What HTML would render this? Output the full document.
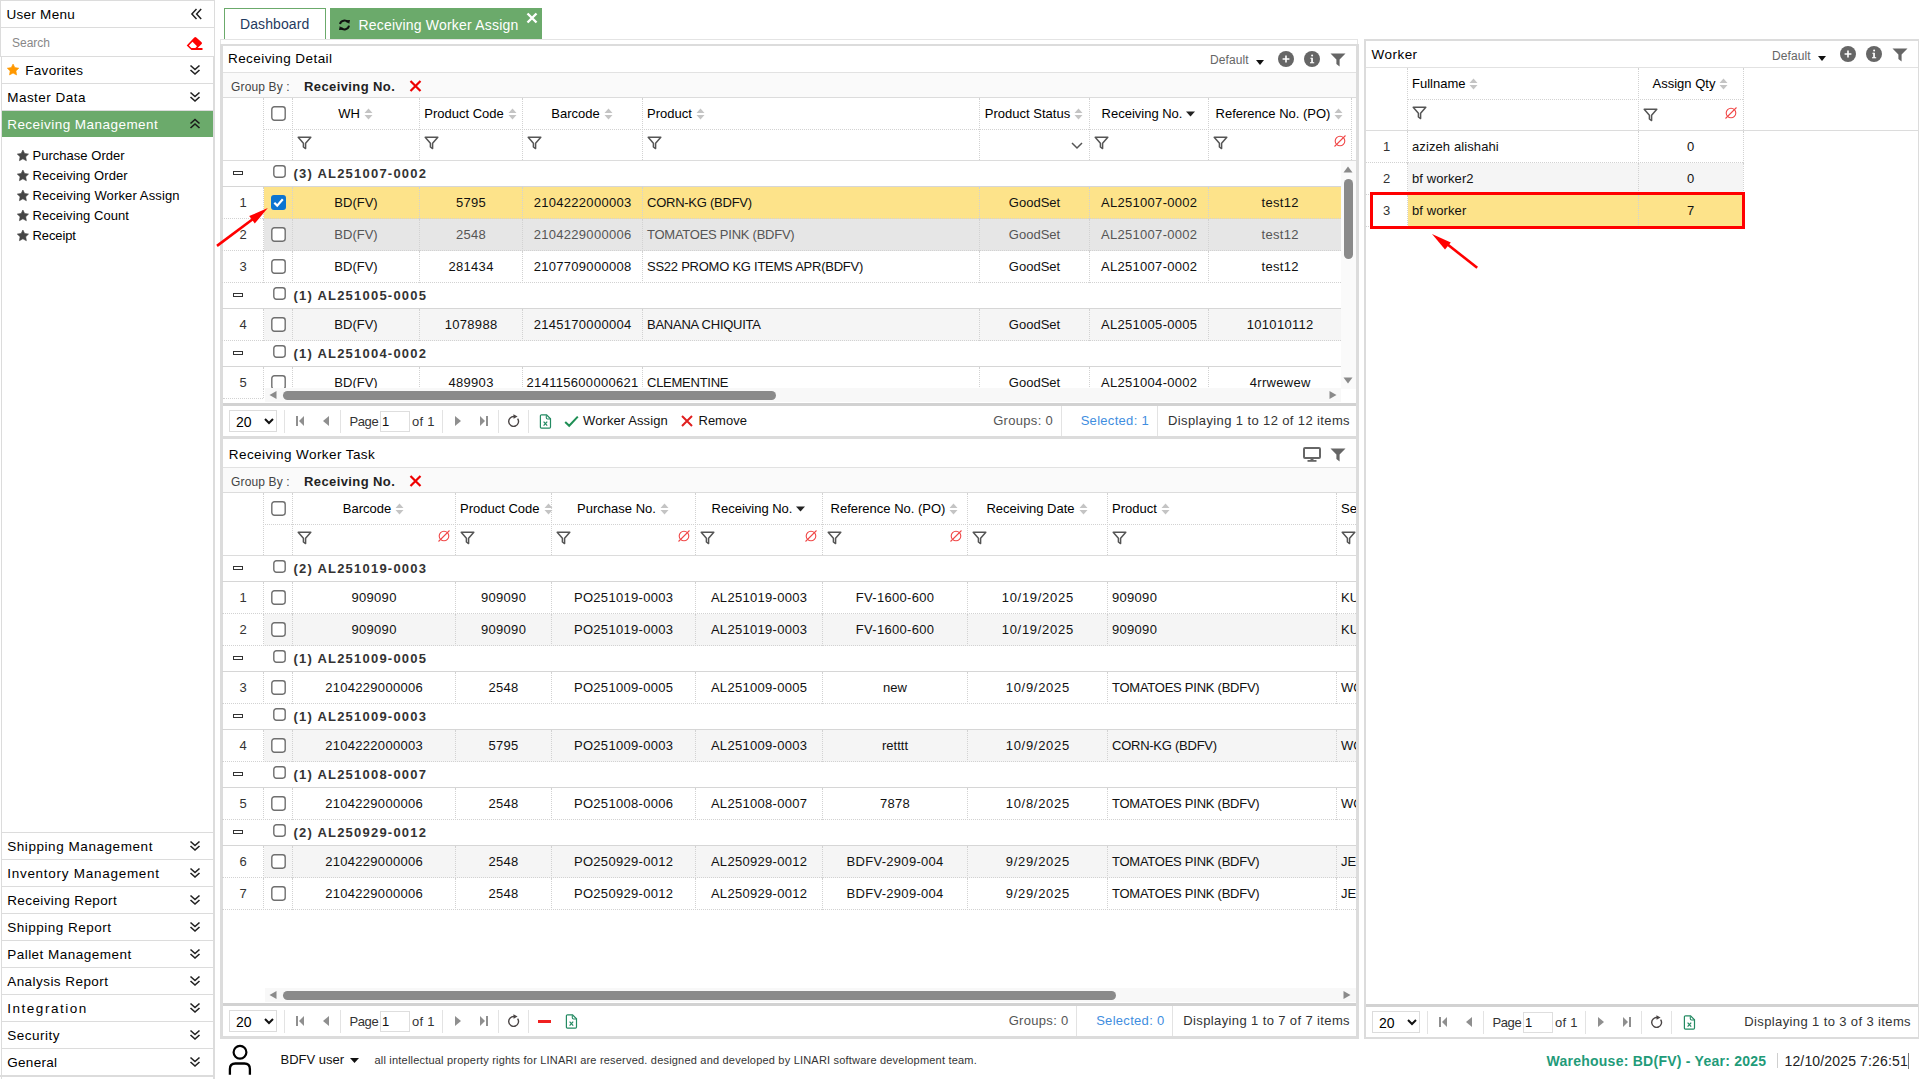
<!DOCTYPE html><html><head><meta charset="utf-8"><style>
html,body{margin:0;padding:0;width:1919px;height:1079px;overflow:hidden;background:#fff;font-family:"Liberation Sans",sans-serif;}
div{position:absolute;box-sizing:content-box}
.t{white-space:nowrap;overflow:visible}
</style></head><body>
<div style="left:0px;top:0px;width:213px;height:56px;border:1px solid #dcdcdc;border-right:1px solid #dcdcdc;border-bottom:none"></div>
<div style="left:1px;top:27px;width:213px;height:1px;background:#dcdcdc"></div>
<div style="left:1px;top:56px;width:213px;height:1px;background:#dcdcdc"></div>
<div class="t" style="top:4.5px;height:20px;line-height:20px;font-size:13.5px;color:#000;letter-spacing:0.271px;left:6.5px;">User Menu</div>
<svg style="position:absolute;left:189.7px;top:7px;" width="14" height="14" viewBox="0 0 14 14"><path d="M6.5 1.9 L1.9 6.9 L6.5 11.9 M11.2 1.9 L6.6 6.9 L11.2 11.9" fill="none" stroke="#222" stroke-width="1.5"/></svg>
<div class="t" style="top:32.5px;height:20px;line-height:20px;font-size:12px;color:#888;left:12px;">Search</div>
<svg style="position:absolute;left:186px;top:36px;" width="18" height="15" viewBox="0 0 18 15"><path d="M0.7 9.5 L8.3 1.6 Q9.3 0.6 10.3 1.6 L15.6 6.2 Q16.5 7.1 15.6 8 L11.6 12 H16.5 V13.9 H5.4 Z" fill="#f00"/><path d="M2.9 9.4 L6.5 5.8 L11 10.2 L9.4 11.9 H5.4 Z" fill="#fff"/></svg>
<div style="left:1px;top:57px;width:211px;height:1022px;border-left:1px solid #dcdcdc;border-right:2px solid #dcdcdc;"></div>
<div style="left:2px;top:83px;width:211px;height:1px;background:#dcdcdc"></div>
<div style="left:2px;top:110px;width:211px;height:1px;background:#dcdcdc"></div>
<svg style="position:absolute;left:6.3999999999999995px;top:63.2px;" width="15" height="15" viewBox="0 0 15 15"><path d="M7.05 1.00 L8.83 4.60 L12.80 5.18 L9.93 7.98 L10.61 11.94 L7.05 10.07 L3.49 11.94 L4.17 7.98 L1.30 5.18 L5.27 4.60 Z" fill="#ff9800" stroke="#ff9800" stroke-width="0.6" stroke-linejoin="round"/></svg>
<div class="t" style="top:60.5px;height:20px;line-height:20px;font-size:13.5px;color:#000;letter-spacing:0.284px;left:25.3px;">Favorites</div>
<svg style="position:absolute;left:189px;top:64px;" width="12" height="12" viewBox="0 0 12 12"><path d="M1.5 1.5 L6 5.5 L10.5 1.5 M1.5 6 L6 10 L10.5 6" fill="none" stroke="#222" stroke-width="1.6"/></svg>
<div class="t" style="top:87.5px;height:20px;line-height:20px;font-size:13.5px;color:#000;letter-spacing:0.477px;left:7.2px;">Master Data</div>
<svg style="position:absolute;left:189px;top:91px;" width="12" height="12" viewBox="0 0 12 12"><path d="M1.5 1.5 L6 5.5 L10.5 1.5 M1.5 6 L6 10 L10.5 6" fill="none" stroke="#222" stroke-width="1.6"/></svg>
<div style="left:2px;top:111px;width:211px;height:26px;background:#6baa6b"></div>
<div class="t" style="top:114.5px;height:20px;line-height:20px;font-size:13.5px;color:#fff;letter-spacing:0.461px;left:7.2px;">Receiving Management</div>
<svg style="position:absolute;left:189px;top:118px;" width="12" height="12" viewBox="0 0 12 12"><path d="M1.5 5.5 L6 1.5 L10.5 5.5 M1.5 10 L6 6 L10.5 10" fill="none" stroke="#1a1a1a" stroke-width="1.6"/></svg>
<svg style="position:absolute;left:15.950000000000003px;top:149.3px;" width="14" height="14" viewBox="0 0 14 14"><path d="M6.90 1.00 L8.63 4.51 L12.51 5.08 L9.71 7.81 L10.37 11.67 L6.90 9.85 L3.43 11.67 L4.09 7.81 L1.29 5.08 L5.17 4.51 Z" fill="#444" stroke="#444" stroke-width="0.6" stroke-linejoin="round"/></svg>
<div class="t" style="top:145.5px;height:20px;line-height:20px;font-size:13px;color:#000;letter-spacing:0.026px;left:32.5px;">Purchase Order</div>
<svg style="position:absolute;left:15.950000000000003px;top:169.3px;" width="14" height="14" viewBox="0 0 14 14"><path d="M6.90 1.00 L8.63 4.51 L12.51 5.08 L9.71 7.81 L10.37 11.67 L6.90 9.85 L3.43 11.67 L4.09 7.81 L1.29 5.08 L5.17 4.51 Z" fill="#444" stroke="#444" stroke-width="0.6" stroke-linejoin="round"/></svg>
<div class="t" style="top:165.5px;height:20px;line-height:20px;font-size:13px;color:#000;letter-spacing:0.090px;left:32.5px;">Receiving Order</div>
<svg style="position:absolute;left:15.950000000000003px;top:189.3px;" width="14" height="14" viewBox="0 0 14 14"><path d="M6.90 1.00 L8.63 4.51 L12.51 5.08 L9.71 7.81 L10.37 11.67 L6.90 9.85 L3.43 11.67 L4.09 7.81 L1.29 5.08 L5.17 4.51 Z" fill="#444" stroke="#444" stroke-width="0.6" stroke-linejoin="round"/></svg>
<div class="t" style="top:185.5px;height:20px;line-height:20px;font-size:13px;color:#000;letter-spacing:0.124px;left:32.5px;">Receiving Worker Assign</div>
<svg style="position:absolute;left:15.950000000000003px;top:209.3px;" width="14" height="14" viewBox="0 0 14 14"><path d="M6.90 1.00 L8.63 4.51 L12.51 5.08 L9.71 7.81 L10.37 11.67 L6.90 9.85 L3.43 11.67 L4.09 7.81 L1.29 5.08 L5.17 4.51 Z" fill="#444" stroke="#444" stroke-width="0.6" stroke-linejoin="round"/></svg>
<div class="t" style="top:205.5px;height:20px;line-height:20px;font-size:13px;color:#000;letter-spacing:0.072px;left:32.5px;">Receiving Count</div>
<svg style="position:absolute;left:15.950000000000003px;top:229.3px;" width="14" height="14" viewBox="0 0 14 14"><path d="M6.90 1.00 L8.63 4.51 L12.51 5.08 L9.71 7.81 L10.37 11.67 L6.90 9.85 L3.43 11.67 L4.09 7.81 L1.29 5.08 L5.17 4.51 Z" fill="#444" stroke="#444" stroke-width="0.6" stroke-linejoin="round"/></svg>
<div class="t" style="top:225.5px;height:20px;line-height:20px;font-size:13px;color:#000;letter-spacing:-0.113px;left:32.5px;">Receipt</div>
<div style="left:2px;top:832px;width:211px;height:1px;background:#dcdcdc"></div>
<div class="t" style="top:836.5px;height:20px;line-height:20px;font-size:13.5px;color:#000;letter-spacing:0.561px;left:7.2px;">Shipping Management</div>
<svg style="position:absolute;left:189px;top:840px;" width="12" height="12" viewBox="0 0 12 12"><path d="M1.5 1.5 L6 5.5 L10.5 1.5 M1.5 6 L6 10 L10.5 6" fill="none" stroke="#222" stroke-width="1.6"/></svg>
<div style="left:2px;top:859px;width:211px;height:1px;background:#dcdcdc"></div>
<div class="t" style="top:863.5px;height:20px;line-height:20px;font-size:13.5px;color:#000;letter-spacing:0.727px;left:7.2px;">Inventory Management</div>
<svg style="position:absolute;left:189px;top:867px;" width="12" height="12" viewBox="0 0 12 12"><path d="M1.5 1.5 L6 5.5 L10.5 1.5 M1.5 6 L6 10 L10.5 6" fill="none" stroke="#222" stroke-width="1.6"/></svg>
<div style="left:2px;top:886px;width:211px;height:1px;background:#dcdcdc"></div>
<div class="t" style="top:890.5px;height:20px;line-height:20px;font-size:13.5px;color:#000;letter-spacing:0.402px;left:7.2px;">Receiving Report</div>
<svg style="position:absolute;left:189px;top:894px;" width="12" height="12" viewBox="0 0 12 12"><path d="M1.5 1.5 L6 5.5 L10.5 1.5 M1.5 6 L6 10 L10.5 6" fill="none" stroke="#222" stroke-width="1.6"/></svg>
<div style="left:2px;top:913px;width:211px;height:1px;background:#dcdcdc"></div>
<div class="t" style="top:917.5px;height:20px;line-height:20px;font-size:13.5px;color:#000;letter-spacing:0.505px;left:7.2px;">Shipping Report</div>
<svg style="position:absolute;left:189px;top:921px;" width="12" height="12" viewBox="0 0 12 12"><path d="M1.5 1.5 L6 5.5 L10.5 1.5 M1.5 6 L6 10 L10.5 6" fill="none" stroke="#222" stroke-width="1.6"/></svg>
<div style="left:2px;top:940px;width:211px;height:1px;background:#dcdcdc"></div>
<div class="t" style="top:944.5px;height:20px;line-height:20px;font-size:13.5px;color:#000;letter-spacing:0.479px;left:7.2px;">Pallet Management</div>
<svg style="position:absolute;left:189px;top:948px;" width="12" height="12" viewBox="0 0 12 12"><path d="M1.5 1.5 L6 5.5 L10.5 1.5 M1.5 6 L6 10 L10.5 6" fill="none" stroke="#222" stroke-width="1.6"/></svg>
<div style="left:2px;top:967px;width:211px;height:1px;background:#dcdcdc"></div>
<div class="t" style="top:971.5px;height:20px;line-height:20px;font-size:13.5px;color:#000;letter-spacing:0.447px;left:7.2px;">Analysis Report</div>
<svg style="position:absolute;left:189px;top:975px;" width="12" height="12" viewBox="0 0 12 12"><path d="M1.5 1.5 L6 5.5 L10.5 1.5 M1.5 6 L6 10 L10.5 6" fill="none" stroke="#222" stroke-width="1.6"/></svg>
<div style="left:2px;top:994px;width:211px;height:1px;background:#dcdcdc"></div>
<div class="t" style="top:998.5px;height:20px;line-height:20px;font-size:13.5px;color:#000;letter-spacing:1.540px;left:7.2px;">Integration</div>
<svg style="position:absolute;left:189px;top:1002px;" width="12" height="12" viewBox="0 0 12 12"><path d="M1.5 1.5 L6 5.5 L10.5 1.5 M1.5 6 L6 10 L10.5 6" fill="none" stroke="#222" stroke-width="1.6"/></svg>
<div style="left:2px;top:1021px;width:211px;height:1px;background:#dcdcdc"></div>
<div class="t" style="top:1025.5px;height:20px;line-height:20px;font-size:13.5px;color:#000;letter-spacing:0.503px;left:7.2px;">Security</div>
<svg style="position:absolute;left:189px;top:1029px;" width="12" height="12" viewBox="0 0 12 12"><path d="M1.5 1.5 L6 5.5 L10.5 1.5 M1.5 6 L6 10 L10.5 6" fill="none" stroke="#222" stroke-width="1.6"/></svg>
<div style="left:2px;top:1048px;width:211px;height:1px;background:#dcdcdc"></div>
<div class="t" style="top:1052.5px;height:20px;line-height:20px;font-size:13.5px;color:#000;letter-spacing:0.311px;left:7.2px;">General</div>
<svg style="position:absolute;left:189px;top:1056px;" width="12" height="12" viewBox="0 0 12 12"><path d="M1.5 1.5 L6 5.5 L10.5 1.5 M1.5 6 L6 10 L10.5 6" fill="none" stroke="#222" stroke-width="1.6"/></svg>
<div style="left:0px;top:1075px;width:213px;height:2px;background:#dcdcdc"></div>
<div style="left:224px;top:8px;width:100px;height:30px;border:1px solid #6baa6b;border-bottom:none;background:#fff"></div>
<div class="t" style="top:14.0px;height:20px;line-height:20px;font-size:14px;color:#1f3a60;letter-spacing:0.1px;left:240px;">Dashboard</div>
<div style="left:330px;top:8px;width:212px;height:31px;background:#6baa6b"></div>
<svg style="position:absolute;left:338px;top:19px;" width="13" height="12" viewBox="0 0 13 12"><path d="M2 5 A4.5 4.5 0 0 1 10 3.4" fill="none" stroke="#111" stroke-width="2"/><path d="M11 6.6 A4.5 4.5 0 0 1 3 8.6" fill="none" stroke="#111" stroke-width="2"/><path d="M8.2 1.2 L12 1 L11.2 5 Z M4.8 10.8 L1 11 L1.8 7 Z" fill="#111"/></svg>
<div class="t" style="top:14.5px;height:20px;line-height:20px;font-size:14px;color:#fff;letter-spacing:0.2px;left:358.5px;">Receiving Worker Assign</div>
<svg style="position:absolute;left:526px;top:12px;" width="12" height="12" viewBox="0 0 12 12"><path d="M1.5 1.5 L10.5 10.5 M10.5 1.5 L1.5 10.5" stroke="#fff" stroke-width="2.4"/></svg>
<div style="left:220px;top:39px;width:1138px;height:1px;background:#e4e4e4"></div>
<div style="left:220px;top:39px;width:1px;height:6px;background:#e4e4e4"></div>
<div style="left:1357px;top:39px;width:1px;height:6px;background:#e4e4e4"></div>
<div style="left:220px;top:44px;width:3px;height:394px;background:#dcdcdc"></div>
<div style="left:220px;top:44px;width:1138px;height:2px;background:#dcdcdc"></div>
<div style="left:1356px;top:44px;width:3px;height:395px;background:#dcdcdc"></div>
<div style="left:220px;top:436px;width:1139px;height:3px;background:#dcdcdc"></div>
<div style="left:223px;top:72px;width:1133px;height:1px;background:#e2e2e2"></div>
<div class="t" style="top:49.3px;height:20px;line-height:20px;font-size:13.5px;color:#000;letter-spacing:0.430px;left:228px;">Receiving Detail</div>
<div class="t" style="top:50.0px;height:20px;line-height:20px;font-size:12px;color:#666;letter-spacing:0.1px;left:1210px;">Default</div>
<svg style="position:absolute;left:1256px;top:60px;" width="8" height="5" viewBox="0 0 8 5"><path d="M0 0 L8 0 L4.0 5 Z" fill="#111"/></svg>
<svg style="position:absolute;left:1278px;top:51px;" width="16" height="16" viewBox="0 0 16 16"><circle cx="8" cy="8" r="8" fill="#666"/><path d="M8 4.6 V11.4 M4.6 8 H11.4" stroke="#fff" stroke-width="1.6"/></svg>
<svg style="position:absolute;left:1304px;top:51px;" width="16" height="16" viewBox="0 0 16 16"><circle cx="8" cy="8" r="8" fill="#666"/><rect x="7.2" y="6.8" width="1.7" height="5" fill="#fff"/><rect x="6" y="11.2" width="4.2" height="1.1" fill="#fff"/><rect x="6.3" y="6.8" width="1.6" height="0.9" fill="#fff"/><circle cx="8.1" cy="4.6" r="1" fill="#fff"/></svg>
<svg style="position:absolute;left:1330px;top:53px;" width="16" height="14" viewBox="0 0 16 14"><path d="M0.5 0.5 H15.5 L9.6 6.6 V13.5 L6.4 11 V6.6 Z" fill="#666"/></svg>
<div style="left:223px;top:73px;width:1133px;height:24px;background:#fafafa"></div>
<div style="left:223px;top:97px;width:1133px;height:1px;background:#dcdcdc"></div>
<div class="t" style="top:77.0px;height:20px;line-height:20px;font-size:12px;color:#444;letter-spacing:0.15px;left:231px;">Group By :</div>
<div class="t" style="top:76.5px;height:20px;line-height:20px;font-size:13px;color:#222;font-weight:700;letter-spacing:0.4px;left:304px;">Receiving No.</div>
<svg style="position:absolute;left:409px;top:80px;" width="13" height="12" viewBox="0 0 13 12"><path d="M1.5 1 L11.5 11 M11.5 1 L1.5 11" stroke="#e00" stroke-width="2.2"/></svg>
<div style="left:263px;top:98px;width:0px;height:62px;border-left:1px dotted #d2d2d2"></div>
<div style="left:292px;top:98px;width:0px;height:62px;border-left:1px dotted #d2d2d2"></div>
<div style="left:419px;top:98px;width:0px;height:62px;border-left:1px dotted #d2d2d2"></div>
<div style="left:522px;top:98px;width:0px;height:62px;border-left:1px dotted #d2d2d2"></div>
<div style="left:642px;top:98px;width:0px;height:62px;border-left:1px dotted #d2d2d2"></div>
<div style="left:979px;top:98px;width:0px;height:62px;border-left:1px dotted #d2d2d2"></div>
<div style="left:1089px;top:98px;width:0px;height:62px;border-left:1px dotted #d2d2d2"></div>
<div style="left:1208px;top:98px;width:0px;height:62px;border-left:1px dotted #d2d2d2"></div>
<div style="left:1351px;top:98px;width:0px;height:62px;border-left:1px dotted #d2d2d2"></div>
<div style="left:263px;top:129px;width:1088px;height:0px;border-top:1px dotted #d2d2d2"></div>
<div style="left:222px;top:160px;width:1134px;height:1px;background:#dcdcdc"></div>
<svg style="position:absolute;left:271px;top:106px;" width="15" height="15" viewBox="0 0 15 15"><rect x="0.8" y="0.8" width="13.4" height="13.4" rx="2.6" fill="#fff" stroke="#6f6f6f" stroke-width="1.4"/></svg>
<div class="t" style="top:104.0px;height:20px;line-height:20px;font-size:13px;color:#000;left:338.1640625px;">WH</div>
<svg style="position:absolute;left:363.8359375px;top:108.0px;" width="9" height="12" viewBox="0 0 9 12"><path d="M4.5 0.5 L8.5 5 L0.5 5 Z M0.5 7 L8.5 7 L4.5 11.5 Z" fill="#c4c4c4"/></svg>
<div class="t" style="top:104.0px;height:20px;line-height:20px;font-size:13px;color:#000;left:424.25px;">Product Code</div>
<svg style="position:absolute;left:507.75px;top:108.0px;" width="9" height="12" viewBox="0 0 9 12"><path d="M4.5 0.5 L8.5 5 L0.5 5 Z M0.5 7 L8.5 7 L4.5 11.5 Z" fill="#c4c4c4"/></svg>
<div class="t" style="top:104.0px;height:20px;line-height:20px;font-size:13px;color:#000;left:551.2890625px;">Barcode</div>
<svg style="position:absolute;left:603.7109375px;top:108.0px;" width="9" height="12" viewBox="0 0 9 12"><path d="M4.5 0.5 L8.5 5 L0.5 5 Z M0.5 7 L8.5 7 L4.5 11.5 Z" fill="#c4c4c4"/></svg>
<div class="t" style="top:104.0px;height:20px;line-height:20px;font-size:13px;color:#000;left:647px;">Product</div>
<svg style="position:absolute;left:695.8125px;top:108.0px;" width="9" height="12" viewBox="0 0 9 12"><path d="M4.5 0.5 L8.5 5 L0.5 5 Z M0.5 7 L8.5 7 L4.5 11.5 Z" fill="#c4c4c4"/></svg>
<div class="t" style="top:104.0px;height:20px;line-height:20px;font-size:13px;color:#000;left:984.859375px;">Product Status</div>
<svg style="position:absolute;left:1074.140625px;top:108.0px;" width="9" height="12" viewBox="0 0 9 12"><path d="M4.5 0.5 L8.5 5 L0.5 5 Z M0.5 7 L8.5 7 L4.5 11.5 Z" fill="#c4c4c4"/></svg>
<div class="t" style="top:104.0px;height:20px;line-height:20px;font-size:13px;color:#000;left:1101.53125px;">Receiving No.</div>
<svg style="position:absolute;left:1186.46875px;top:111.0px;" width="9" height="6" viewBox="0 0 9 6"><path d="M0 0.5 L9 0.5 L4.5 5.5 Z" fill="#222"/></svg>
<div class="t" style="top:104.0px;height:20px;line-height:20px;font-size:13px;color:#000;left:1215.5625px;">Reference No. (PO)</div>
<svg style="position:absolute;left:1334.4375px;top:108.0px;" width="9" height="12" viewBox="0 0 9 12"><path d="M4.5 0.5 L8.5 5 L0.5 5 Z M0.5 7 L8.5 7 L4.5 11.5 Z" fill="#c4c4c4"/></svg>
<svg style="position:absolute;left:297px;top:136px;" width="15" height="14" viewBox="0 0 15 14"><path d="M1.2 1.2 H13.8 L8.6 7.2 V12.6 L6.4 11 V7.2 Z" fill="none" stroke="#555" stroke-width="1.5" stroke-linejoin="round"/></svg>
<svg style="position:absolute;left:424px;top:136px;" width="15" height="14" viewBox="0 0 15 14"><path d="M1.2 1.2 H13.8 L8.6 7.2 V12.6 L6.4 11 V7.2 Z" fill="none" stroke="#555" stroke-width="1.5" stroke-linejoin="round"/></svg>
<svg style="position:absolute;left:527px;top:136px;" width="15" height="14" viewBox="0 0 15 14"><path d="M1.2 1.2 H13.8 L8.6 7.2 V12.6 L6.4 11 V7.2 Z" fill="none" stroke="#555" stroke-width="1.5" stroke-linejoin="round"/></svg>
<svg style="position:absolute;left:647px;top:136px;" width="15" height="14" viewBox="0 0 15 14"><path d="M1.2 1.2 H13.8 L8.6 7.2 V12.6 L6.4 11 V7.2 Z" fill="none" stroke="#555" stroke-width="1.5" stroke-linejoin="round"/></svg>
<svg style="position:absolute;left:1071px;top:141.5px;" width="12" height="8" viewBox="0 0 12 8"><path d="M1 1 L6 6 L11 1" fill="none" stroke="#555" stroke-width="1.5"/></svg>
<svg style="position:absolute;left:1094px;top:136px;" width="15" height="14" viewBox="0 0 15 14"><path d="M1.2 1.2 H13.8 L8.6 7.2 V12.6 L6.4 11 V7.2 Z" fill="none" stroke="#555" stroke-width="1.5" stroke-linejoin="round"/></svg>
<svg style="position:absolute;left:1213px;top:136px;" width="15" height="14" viewBox="0 0 15 14"><path d="M1.2 1.2 H13.8 L8.6 7.2 V12.6 L6.4 11 V7.2 Z" fill="none" stroke="#555" stroke-width="1.5" stroke-linejoin="round"/></svg>
<svg style="position:absolute;left:1333px;top:134px;" width="14" height="14" viewBox="0 0 14 14"><circle cx="7" cy="7" r="4.8" fill="none" stroke="#f04848" stroke-width="1.1"/><path d="M1.5 12.5 L12.5 1.5" stroke="#f04848" stroke-width="1.1"/></svg>
<div style="left:0;top:0;width:1919px;height:1079px;clip-path:polygon(222px 161px, 1356px 161px, 1356px 389px, 222px 389px)">
<div style="left:233px;top:171px;width:8px;height:2px;border:1px solid #333"></div>
<svg style="position:absolute;left:273px;top:165px;" width="13" height="13" viewBox="0 0 13 13"><rect x="0.8" y="0.8" width="11.4" height="11.4" rx="2.6" fill="#fff" stroke="#6f6f6f" stroke-width="1.4"/></svg>
<div class="t" style="top:163.5px;height:20px;line-height:20px;font-size:13px;color:#333;font-weight:700;letter-spacing:1.22px;left:293.5px;">(3) AL251007-0002</div>
<div style="left:222px;top:186px;width:1134px;height:1px;background:#d6d6d6"></div>
<div style="left:264px;top:187px;width:1077px;height:32px;background:#fde38a"></div>
<div style="left:222px;top:218px;width:1119px;height:0px;border-top:1px dotted #d2d2d2"></div>
<div style="left:263px;top:187px;width:0px;height:32px;border-left:1px dotted #d2d2d2"></div>
<div style="left:292px;top:187px;width:0px;height:32px;border-left:1px dotted #d2d2d2"></div>
<div style="left:419px;top:187px;width:0px;height:32px;border-left:1px dotted #d2d2d2"></div>
<div style="left:522px;top:187px;width:0px;height:32px;border-left:1px dotted #d2d2d2"></div>
<div style="left:642px;top:187px;width:0px;height:32px;border-left:1px dotted #d2d2d2"></div>
<div style="left:979px;top:187px;width:0px;height:32px;border-left:1px dotted #d2d2d2"></div>
<div style="left:1089px;top:187px;width:0px;height:32px;border-left:1px dotted #d2d2d2"></div>
<div style="left:1208px;top:187px;width:0px;height:32px;border-left:1px dotted #d2d2d2"></div>
<div style="left:1351px;top:187px;width:0px;height:32px;border-left:1px dotted #d2d2d2"></div>
<div class="t" style="top:193.0px;height:20px;line-height:20px;font-size:13px;color:#333;left:223.0px;width:40px;text-align:center;">1</div>
<div style="left:271px;top:195px;width:15px;height:15px;background:#0b74d1;border-radius:3px"></div>
<svg style="position:absolute;left:271px;top:195px;" width="15" height="15" viewBox="0 0 15 15"><path d="M3.3 7.8 L6.2 10.6 L11.8 4.2" fill="none" stroke="#fff" stroke-width="2.2"/></svg>
<div class="t" style="top:193.0px;height:20px;line-height:20px;font-size:13px;color:#111;left:272.5px;width:167px;text-align:center;">BD(FV)</div>
<div class="t" style="top:193.0px;height:20px;line-height:20px;font-size:13px;color:#111;letter-spacing:0.3px;left:399.6px;width:143px;text-align:center;">5795</div>
<div class="t" style="top:193.0px;height:20px;line-height:20px;font-size:13px;color:#111;letter-spacing:0.3px;left:502.6px;width:160px;text-align:center;">2104222000003</div>
<div class="t" style="top:193.0px;height:20px;line-height:20px;font-size:13px;color:#111;letter-spacing:-0.25px;left:647px;">CORN-KG (BDFV)</div>
<div class="t" style="top:193.0px;height:20px;line-height:20px;font-size:13px;color:#111;left:959.5px;width:150px;text-align:center;">GoodSet</div>
<div class="t" style="top:193.0px;height:20px;line-height:20px;font-size:13px;color:#111;letter-spacing:0.3px;left:1069.7px;width:159px;text-align:center;">AL251007-0002</div>
<div class="t" style="top:193.0px;height:20px;line-height:20px;font-size:13px;color:#111;letter-spacing:0.3px;left:1188.7px;width:183px;text-align:center;">test12</div>
<div style="left:264px;top:219px;width:1077px;height:32px;background:#e6e6e6"></div>
<div style="left:222px;top:250px;width:1119px;height:0px;border-top:1px dotted #d2d2d2"></div>
<div style="left:263px;top:219px;width:0px;height:32px;border-left:1px dotted #d2d2d2"></div>
<div style="left:292px;top:219px;width:0px;height:32px;border-left:1px dotted #d2d2d2"></div>
<div style="left:419px;top:219px;width:0px;height:32px;border-left:1px dotted #d2d2d2"></div>
<div style="left:522px;top:219px;width:0px;height:32px;border-left:1px dotted #d2d2d2"></div>
<div style="left:642px;top:219px;width:0px;height:32px;border-left:1px dotted #d2d2d2"></div>
<div style="left:979px;top:219px;width:0px;height:32px;border-left:1px dotted #d2d2d2"></div>
<div style="left:1089px;top:219px;width:0px;height:32px;border-left:1px dotted #d2d2d2"></div>
<div style="left:1208px;top:219px;width:0px;height:32px;border-left:1px dotted #d2d2d2"></div>
<div style="left:1351px;top:219px;width:0px;height:32px;border-left:1px dotted #d2d2d2"></div>
<div class="t" style="top:225.0px;height:20px;line-height:20px;font-size:13px;color:#333;left:223.0px;width:40px;text-align:center;">2</div>
<svg style="position:absolute;left:271px;top:227px;" width="15" height="15" viewBox="0 0 15 15"><rect x="0.8" y="0.8" width="13.4" height="13.4" rx="2.6" fill="#fff" stroke="#6f6f6f" stroke-width="1.4"/></svg>
<div class="t" style="top:225.0px;height:20px;line-height:20px;font-size:13px;color:#555;left:272.5px;width:167px;text-align:center;">BD(FV)</div>
<div class="t" style="top:225.0px;height:20px;line-height:20px;font-size:13px;color:#555;letter-spacing:0.3px;left:399.6px;width:143px;text-align:center;">2548</div>
<div class="t" style="top:225.0px;height:20px;line-height:20px;font-size:13px;color:#555;letter-spacing:0.3px;left:502.6px;width:160px;text-align:center;">2104229000006</div>
<div class="t" style="top:225.0px;height:20px;line-height:20px;font-size:13px;color:#555;letter-spacing:-0.25px;left:647px;">TOMATOES PINK (BDFV)</div>
<div class="t" style="top:225.0px;height:20px;line-height:20px;font-size:13px;color:#555;left:959.5px;width:150px;text-align:center;">GoodSet</div>
<div class="t" style="top:225.0px;height:20px;line-height:20px;font-size:13px;color:#555;letter-spacing:0.3px;left:1069.7px;width:159px;text-align:center;">AL251007-0002</div>
<div class="t" style="top:225.0px;height:20px;line-height:20px;font-size:13px;color:#555;letter-spacing:0.3px;left:1188.7px;width:183px;text-align:center;">test12</div>
<div style="left:222px;top:282px;width:1119px;height:0px;border-top:1px dotted #d2d2d2"></div>
<div style="left:263px;top:251px;width:0px;height:32px;border-left:1px dotted #d2d2d2"></div>
<div style="left:292px;top:251px;width:0px;height:32px;border-left:1px dotted #d2d2d2"></div>
<div style="left:419px;top:251px;width:0px;height:32px;border-left:1px dotted #d2d2d2"></div>
<div style="left:522px;top:251px;width:0px;height:32px;border-left:1px dotted #d2d2d2"></div>
<div style="left:642px;top:251px;width:0px;height:32px;border-left:1px dotted #d2d2d2"></div>
<div style="left:979px;top:251px;width:0px;height:32px;border-left:1px dotted #d2d2d2"></div>
<div style="left:1089px;top:251px;width:0px;height:32px;border-left:1px dotted #d2d2d2"></div>
<div style="left:1208px;top:251px;width:0px;height:32px;border-left:1px dotted #d2d2d2"></div>
<div style="left:1351px;top:251px;width:0px;height:32px;border-left:1px dotted #d2d2d2"></div>
<div class="t" style="top:257.0px;height:20px;line-height:20px;font-size:13px;color:#333;left:223.0px;width:40px;text-align:center;">3</div>
<svg style="position:absolute;left:271px;top:259px;" width="15" height="15" viewBox="0 0 15 15"><rect x="0.8" y="0.8" width="13.4" height="13.4" rx="2.6" fill="#fff" stroke="#6f6f6f" stroke-width="1.4"/></svg>
<div class="t" style="top:257.0px;height:20px;line-height:20px;font-size:13px;color:#111;left:272.5px;width:167px;text-align:center;">BD(FV)</div>
<div class="t" style="top:257.0px;height:20px;line-height:20px;font-size:13px;color:#111;letter-spacing:0.3px;left:399.6px;width:143px;text-align:center;">281434</div>
<div class="t" style="top:257.0px;height:20px;line-height:20px;font-size:13px;color:#111;letter-spacing:0.3px;left:502.6px;width:160px;text-align:center;">2107709000008</div>
<div class="t" style="top:257.0px;height:20px;line-height:20px;font-size:13px;color:#111;letter-spacing:-0.25px;left:647px;">SS22 PROMO KG ITEMS APR(BDFV)</div>
<div class="t" style="top:257.0px;height:20px;line-height:20px;font-size:13px;color:#111;left:959.5px;width:150px;text-align:center;">GoodSet</div>
<div class="t" style="top:257.0px;height:20px;line-height:20px;font-size:13px;color:#111;letter-spacing:0.3px;left:1069.7px;width:159px;text-align:center;">AL251007-0002</div>
<div class="t" style="top:257.0px;height:20px;line-height:20px;font-size:13px;color:#111;letter-spacing:0.3px;left:1188.7px;width:183px;text-align:center;">test12</div>
<div style="left:233px;top:293px;width:8px;height:2px;border:1px solid #333"></div>
<svg style="position:absolute;left:273px;top:287px;" width="13" height="13" viewBox="0 0 13 13"><rect x="0.8" y="0.8" width="11.4" height="11.4" rx="2.6" fill="#fff" stroke="#6f6f6f" stroke-width="1.4"/></svg>
<div class="t" style="top:285.5px;height:20px;line-height:20px;font-size:13px;color:#333;font-weight:700;letter-spacing:1.22px;left:293.5px;">(1) AL251005-0005</div>
<div style="left:222px;top:308px;width:1134px;height:1px;background:#d6d6d6"></div>
<div style="left:264px;top:309px;width:1077px;height:32px;background:#f5f5f5"></div>
<div style="left:222px;top:340px;width:1119px;height:0px;border-top:1px dotted #d2d2d2"></div>
<div style="left:263px;top:309px;width:0px;height:32px;border-left:1px dotted #d2d2d2"></div>
<div style="left:292px;top:309px;width:0px;height:32px;border-left:1px dotted #d2d2d2"></div>
<div style="left:419px;top:309px;width:0px;height:32px;border-left:1px dotted #d2d2d2"></div>
<div style="left:522px;top:309px;width:0px;height:32px;border-left:1px dotted #d2d2d2"></div>
<div style="left:642px;top:309px;width:0px;height:32px;border-left:1px dotted #d2d2d2"></div>
<div style="left:979px;top:309px;width:0px;height:32px;border-left:1px dotted #d2d2d2"></div>
<div style="left:1089px;top:309px;width:0px;height:32px;border-left:1px dotted #d2d2d2"></div>
<div style="left:1208px;top:309px;width:0px;height:32px;border-left:1px dotted #d2d2d2"></div>
<div style="left:1351px;top:309px;width:0px;height:32px;border-left:1px dotted #d2d2d2"></div>
<div class="t" style="top:315.0px;height:20px;line-height:20px;font-size:13px;color:#333;left:223.0px;width:40px;text-align:center;">4</div>
<svg style="position:absolute;left:271px;top:317px;" width="15" height="15" viewBox="0 0 15 15"><rect x="0.8" y="0.8" width="13.4" height="13.4" rx="2.6" fill="#fff" stroke="#6f6f6f" stroke-width="1.4"/></svg>
<div class="t" style="top:315.0px;height:20px;line-height:20px;font-size:13px;color:#111;left:272.5px;width:167px;text-align:center;">BD(FV)</div>
<div class="t" style="top:315.0px;height:20px;line-height:20px;font-size:13px;color:#111;letter-spacing:0.3px;left:399.6px;width:143px;text-align:center;">1078988</div>
<div class="t" style="top:315.0px;height:20px;line-height:20px;font-size:13px;color:#111;letter-spacing:0.3px;left:502.6px;width:160px;text-align:center;">2145170000004</div>
<div class="t" style="top:315.0px;height:20px;line-height:20px;font-size:13px;color:#111;letter-spacing:-0.25px;left:647px;">BANANA CHIQUITA</div>
<div class="t" style="top:315.0px;height:20px;line-height:20px;font-size:13px;color:#111;left:959.5px;width:150px;text-align:center;">GoodSet</div>
<div class="t" style="top:315.0px;height:20px;line-height:20px;font-size:13px;color:#111;letter-spacing:0.3px;left:1069.7px;width:159px;text-align:center;">AL251005-0005</div>
<div class="t" style="top:315.0px;height:20px;line-height:20px;font-size:13px;color:#111;letter-spacing:0.3px;left:1188.7px;width:183px;text-align:center;">101010112</div>
<div style="left:233px;top:351px;width:8px;height:2px;border:1px solid #333"></div>
<svg style="position:absolute;left:273px;top:345px;" width="13" height="13" viewBox="0 0 13 13"><rect x="0.8" y="0.8" width="11.4" height="11.4" rx="2.6" fill="#fff" stroke="#6f6f6f" stroke-width="1.4"/></svg>
<div class="t" style="top:343.5px;height:20px;line-height:20px;font-size:13px;color:#333;font-weight:700;letter-spacing:1.22px;left:293.5px;">(1) AL251004-0002</div>
<div style="left:222px;top:366px;width:1134px;height:1px;background:#d6d6d6"></div>
<div style="left:263px;top:367px;width:0px;height:22px;border-left:1px dotted #d2d2d2"></div>
<div style="left:292px;top:367px;width:0px;height:22px;border-left:1px dotted #d2d2d2"></div>
<div style="left:419px;top:367px;width:0px;height:22px;border-left:1px dotted #d2d2d2"></div>
<div style="left:522px;top:367px;width:0px;height:22px;border-left:1px dotted #d2d2d2"></div>
<div style="left:642px;top:367px;width:0px;height:22px;border-left:1px dotted #d2d2d2"></div>
<div style="left:979px;top:367px;width:0px;height:22px;border-left:1px dotted #d2d2d2"></div>
<div style="left:1089px;top:367px;width:0px;height:22px;border-left:1px dotted #d2d2d2"></div>
<div style="left:1208px;top:367px;width:0px;height:22px;border-left:1px dotted #d2d2d2"></div>
<div style="left:1351px;top:367px;width:0px;height:22px;border-left:1px dotted #d2d2d2"></div>
<div class="t" style="top:373.0px;height:20px;line-height:20px;font-size:13px;color:#333;left:223.0px;width:40px;text-align:center;">5</div>
<svg style="position:absolute;left:271px;top:375px;" width="15" height="15" viewBox="0 0 15 15"><rect x="0.8" y="0.8" width="13.4" height="13.4" rx="2.6" fill="#fff" stroke="#6f6f6f" stroke-width="1.4"/></svg>
<div class="t" style="top:373.0px;height:20px;line-height:20px;font-size:13px;color:#111;left:272.5px;width:167px;text-align:center;">BD(FV)</div>
<div class="t" style="top:373.0px;height:20px;line-height:20px;font-size:13px;color:#111;letter-spacing:0.3px;left:399.6px;width:143px;text-align:center;">489903</div>
<div class="t" style="top:373.0px;height:20px;line-height:20px;font-size:13px;color:#111;letter-spacing:0.3px;left:502.6px;width:160px;text-align:center;">214115600000621</div>
<div class="t" style="top:373.0px;height:20px;line-height:20px;font-size:13px;color:#111;letter-spacing:-0.25px;left:647px;">CLEMENTINE</div>
<div class="t" style="top:373.0px;height:20px;line-height:20px;font-size:13px;color:#111;left:959.5px;width:150px;text-align:center;">GoodSet</div>
<div class="t" style="top:373.0px;height:20px;line-height:20px;font-size:13px;color:#111;letter-spacing:0.3px;left:1069.7px;width:159px;text-align:center;">AL251004-0002</div>
<div class="t" style="top:373.0px;height:20px;line-height:20px;font-size:13px;color:#111;letter-spacing:0.3px;left:1188.7px;width:183px;text-align:center;">4rrwewew</div>
</div>
<div style="left:1341px;top:161px;width:15px;height:228px;background:#fafafa"></div>
<svg style="position:absolute;left:1343px;top:166px;" width="10" height="7" viewBox="0 0 10 7"><path d="M5 0.5 L9.5 6.5 L0.5 6.5 Z" fill="#8a8a8a"/></svg>
<svg style="position:absolute;left:1343px;top:377px;" width="10" height="7" viewBox="0 0 10 7"><path d="M0.5 0.5 L9.5 0.5 L5 6.5 Z" fill="#8a8a8a"/></svg>
<div style="left:1344px;top:179px;width:9.2px;height:80px;background:#8a8a8a;border-radius:5px"></div>
<div style="left:223px;top:389px;width:42px;height:14px;background:#fff"></div>
<div style="left:223px;top:398px;width:40px;height:0px;border-top:1px dotted #d2d2d2"></div>
<div style="left:263px;top:389px;width:0px;height:9px;border-left:1px dotted #d2d2d2"></div>
<div style="left:265px;top:388px;width:1076px;height:14px;background:#f8f8f8"></div>
<svg style="position:absolute;left:269px;top:391px;" width="8" height="8" viewBox="0 0 8 8"><path d="M7.5 0 L0.5 4 L7.5 8 Z" fill="#8a8a8a"/></svg>
<svg style="position:absolute;left:1329px;top:391px;" width="8" height="8" viewBox="0 0 8 8"><path d="M0.5 0 L7.5 4 L0.5 8 Z" fill="#8a8a8a"/></svg>
<div style="left:283px;top:390.5px;width:493px;height:9px;background:#8a8a8a;border-radius:5px"></div>
<div style="left:223px;top:403px;width:1133px;height:3px;background:#d2d2d2"></div>
<div style="left:229px;top:410px;width:46px;height:20px;border:1px solid #dcdcdc;background:#fff"></div>
<div class="t" style="top:411.5px;height:20px;line-height:20px;font-size:14px;color:#000;left:236px;">20</div>
<svg style="position:absolute;left:264px;top:418.0px;" width="10" height="7" viewBox="0 0 10 7"><path d="M1 1 L5 5 L9 1" fill="none" stroke="#111" stroke-width="2"/></svg>
<div style="left:284px;top:410px;width:1px;height:23px;background:#e3e3e3"></div>
<div style="left:340px;top:410px;width:1px;height:23px;background:#e3e3e3"></div>
<div style="left:442px;top:410px;width:1px;height:23px;background:#e3e3e3"></div>
<div style="left:498px;top:410px;width:1px;height:23px;background:#e3e3e3"></div>
<div style="left:528px;top:410px;width:1px;height:23px;background:#e3e3e3"></div>
<svg style="position:absolute;left:295px;top:415px;" width="10" height="12" viewBox="0 0 10 12"><rect x="1" y="1" width="2" height="10" fill="#8f8f8f"/><path d="M9 1 L4 6 L9 11 Z" fill="#8f8f8f"/></svg>
<svg style="position:absolute;left:322px;top:415px;" width="8" height="12" viewBox="0 0 8 12"><path d="M7 1 L1 6 L7 11 Z" fill="#8f8f8f"/></svg>
<svg style="position:absolute;left:454px;top:415px;" width="8" height="12" viewBox="0 0 8 12"><path d="M1 1 L7 6 L1 11 Z" fill="#8f8f8f"/></svg>
<svg style="position:absolute;left:479px;top:415px;" width="10" height="12" viewBox="0 0 10 12"><path d="M1 1 L6 6 L1 11 Z" fill="#8f8f8f"/><rect x="7" y="1" width="2" height="10" fill="#8f8f8f"/></svg>
<svg style="position:absolute;left:507.5px;top:414px;" width="13" height="13" viewBox="0 0 13 13"><path d="M9.6 4.6 A4.9 4.9 0 1 1 6.3 2.6" fill="none" stroke="#4a4545" stroke-width="1.4"/><path d="M5.4 0.2 L9.6 2.5 L5.6 4.8 Z" fill="#4a4545"/></svg>
<div class="t" style="top:411.5px;height:20px;line-height:20px;font-size:13px;color:#333;letter-spacing:-0.4px;left:349.5px;">Page</div>
<div style="left:380px;top:411px;width:28px;height:19px;border:1px solid #dedede;background:#fff"></div>
<div class="t" style="top:411.5px;height:20px;line-height:20px;font-size:13px;color:#111;left:382px;">1</div>
<div class="t" style="top:411.5px;height:20px;line-height:20px;font-size:13px;color:#333;letter-spacing:0.3px;left:412px;">of 1</div>
<svg style="position:absolute;left:539px;top:414px;" width="13" height="15" viewBox="0 0 13 15"><path d="M1.4 2 Q1.4 0.9 2.5 0.9 H7.6 L11.5 4.8 V13 Q11.5 14.1 10.4 14.1 H2.5 Q1.4 14.1 1.4 13 Z" fill="none" stroke="#238a62" stroke-width="1.2"/><path d="M7.3 1.2 V3.8 Q7.3 5 8.5 5 H11.3" fill="none" stroke="#238a62" stroke-width="1.1"/><path d="M4.6 7.6 L8.2 11.6 M8.2 7.6 L4.6 11.6" stroke="#238a62" stroke-width="1.2"/></svg>
<svg style="position:absolute;left:564px;top:415px;" width="15" height="13" viewBox="0 0 15 13"><path d="M1.2 7 L5.2 10.8 L13.8 1.6" fill="none" stroke="#1f8f55" stroke-width="2"/></svg>
<div class="t" style="top:410.5px;height:20px;line-height:20px;font-size:13px;color:#111;letter-spacing:0.1px;left:583px;">Worker Assign</div>
<svg style="position:absolute;left:681px;top:415px;" width="12" height="12" viewBox="0 0 12 12"><path d="M1 1 L11 11 M11 1 L1 11" stroke="#e02020" stroke-width="2"/></svg>
<div class="t" style="top:410.5px;height:20px;line-height:20px;font-size:13px;color:#111;left:698.5px;">Remove</div>
<div style="left:1061px;top:406px;width:1px;height:30px;background:#e3e3e3"></div>
<div style="left:1157px;top:406px;width:1px;height:30px;background:#e3e3e3"></div>
<div class="t" style="top:410.5px;height:20px;line-height:20px;font-size:13px;color:#555;letter-spacing:0.3px;left:933.0px;width:120px;text-align:right;">Groups: 0</div>
<div class="t" style="top:410.5px;height:20px;line-height:20px;font-size:13px;color:#3f8ee0;letter-spacing:0.3px;left:1029.0px;width:120px;text-align:right;">Selected: 1</div>
<div class="t" style="top:410.5px;height:20px;line-height:20px;font-size:13px;color:#333;letter-spacing:0.38px;left:1090.0px;width:260px;text-align:right;">Displaying 1 to 12 of 12 items</div>
<div style="left:220px;top:436px;width:3px;height:602px;background:#dcdcdc"></div>
<div style="left:220px;top:436px;width:1138px;height:2px;background:#dcdcdc"></div>
<div style="left:1356px;top:436px;width:3px;height:603px;background:#dcdcdc"></div>
<div style="left:220px;top:1036px;width:1139px;height:3px;background:#dcdcdc"></div>
<div style="left:223px;top:467px;width:1133px;height:1px;background:#e2e2e2"></div>
<div class="t" style="top:444.5px;height:20px;line-height:20px;font-size:13.5px;color:#000;letter-spacing:0.422px;left:228.8px;">Receiving Worker Task</div>
<svg style="position:absolute;left:1303px;top:447px;" width="18" height="15" viewBox="0 0 18 15"><rect x="1" y="1" width="16" height="10" rx="1" fill="none" stroke="#666" stroke-width="2"/><rect x="7.5" y="11" width="3" height="2.5" fill="#666"/><rect x="4.5" y="13" width="9" height="1.8" fill="#666"/></svg>
<svg style="position:absolute;left:1330px;top:447.5px;" width="16" height="14" viewBox="0 0 16 14"><path d="M0.5 0.5 H15.5 L9.6 6.6 V13.5 L6.4 11 V6.6 Z" fill="#666"/></svg>
<div style="left:223px;top:468px;width:1133px;height:24px;background:#fafafa"></div>
<div style="left:223px;top:492px;width:1133px;height:1px;background:#dcdcdc"></div>
<div class="t" style="top:472.0px;height:20px;line-height:20px;font-size:12px;color:#444;letter-spacing:0.15px;left:231px;">Group By :</div>
<div class="t" style="top:471.5px;height:20px;line-height:20px;font-size:13px;color:#222;font-weight:700;letter-spacing:0.4px;left:304px;">Receiving No.</div>
<svg style="position:absolute;left:409px;top:475px;" width="13" height="12" viewBox="0 0 13 12"><path d="M1.5 1 L11.5 11 M11.5 1 L1.5 11" stroke="#e00" stroke-width="2.2"/></svg>
<div style="left:0;top:0;width:1919px;height:1079px;clip-path:polygon(222px 0px, 1356px 0px, 1356px 1079px, 222px 1079px)">
<div style="left:263px;top:493px;width:0px;height:62px;border-left:1px dotted #d2d2d2"></div>
<div style="left:292px;top:493px;width:0px;height:62px;border-left:1px dotted #d2d2d2"></div>
<div style="left:455px;top:493px;width:0px;height:62px;border-left:1px dotted #d2d2d2"></div>
<div style="left:551px;top:493px;width:0px;height:62px;border-left:1px dotted #d2d2d2"></div>
<div style="left:695px;top:493px;width:0px;height:62px;border-left:1px dotted #d2d2d2"></div>
<div style="left:822px;top:493px;width:0px;height:62px;border-left:1px dotted #d2d2d2"></div>
<div style="left:967px;top:493px;width:0px;height:62px;border-left:1px dotted #d2d2d2"></div>
<div style="left:1107px;top:493px;width:0px;height:62px;border-left:1px dotted #d2d2d2"></div>
<div style="left:1336px;top:493px;width:0px;height:62px;border-left:1px dotted #d2d2d2"></div>
<div style="left:1600px;top:493px;width:0px;height:62px;border-left:1px dotted #d2d2d2"></div>
<div style="left:263px;top:524px;width:1337px;height:0px;border-top:1px dotted #d2d2d2"></div>
<div style="left:222px;top:555px;width:1134px;height:1px;background:#dcdcdc"></div>
<svg style="position:absolute;left:271px;top:501px;" width="15" height="15" viewBox="0 0 15 15"><rect x="0.8" y="0.8" width="13.4" height="13.4" rx="2.6" fill="#fff" stroke="#6f6f6f" stroke-width="1.4"/></svg>
<div class="t" style="top:499.0px;height:20px;line-height:20px;font-size:13px;color:#000;left:342.7890625px;">Barcode</div>
<svg style="position:absolute;left:395.2109375px;top:503.0px;" width="9" height="12" viewBox="0 0 9 12"><path d="M4.5 0.5 L8.5 5 L0.5 5 Z M0.5 7 L8.5 7 L4.5 11.5 Z" fill="#c4c4c4"/></svg>
<div class="t" style="top:499.0px;height:20px;line-height:20px;font-size:13px;color:#000;left:460px;">Product Code</div>
<svg style="position:absolute;left:543.5px;top:503.0px;" width="9" height="12" viewBox="0 0 9 12"><path d="M4.5 0.5 L8.5 5 L0.5 5 Z M0.5 7 L8.5 7 L4.5 11.5 Z" fill="#c4c4c4"/></svg>
<div class="t" style="top:499.0px;height:20px;line-height:20px;font-size:13px;color:#000;left:577.1171875px;">Purchase No.</div>
<svg style="position:absolute;left:659.8828125px;top:503.0px;" width="9" height="12" viewBox="0 0 9 12"><path d="M4.5 0.5 L8.5 5 L0.5 5 Z M0.5 7 L8.5 7 L4.5 11.5 Z" fill="#c4c4c4"/></svg>
<div class="t" style="top:499.0px;height:20px;line-height:20px;font-size:13px;color:#000;left:711.53125px;">Receiving No.</div>
<svg style="position:absolute;left:796.46875px;top:506.0px;" width="9" height="6" viewBox="0 0 9 6"><path d="M0 0.5 L9 0.5 L4.5 5.5 Z" fill="#222"/></svg>
<div class="t" style="top:499.0px;height:20px;line-height:20px;font-size:13px;color:#000;left:830.5625px;">Reference No. (PO)</div>
<svg style="position:absolute;left:949.4375px;top:503.0px;" width="9" height="12" viewBox="0 0 9 12"><path d="M4.5 0.5 L8.5 5 L0.5 5 Z M0.5 7 L8.5 7 L4.5 11.5 Z" fill="#c4c4c4"/></svg>
<div class="t" style="top:499.0px;height:20px;line-height:20px;font-size:13px;color:#000;left:986.421875px;">Receiving Date</div>
<svg style="position:absolute;left:1078.578125px;top:503.0px;" width="9" height="12" viewBox="0 0 9 12"><path d="M4.5 0.5 L8.5 5 L0.5 5 Z M0.5 7 L8.5 7 L4.5 11.5 Z" fill="#c4c4c4"/></svg>
<div class="t" style="top:499.0px;height:20px;line-height:20px;font-size:13px;color:#000;left:1112px;">Product</div>
<svg style="position:absolute;left:1160.8125px;top:503.0px;" width="9" height="12" viewBox="0 0 9 12"><path d="M4.5 0.5 L8.5 5 L0.5 5 Z M0.5 7 L8.5 7 L4.5 11.5 Z" fill="#c4c4c4"/></svg>
<div class="t" style="top:499.0px;height:20px;line-height:20px;font-size:13px;color:#000;left:1341px;">Se</div>
<svg style="position:absolute;left:297px;top:531px;" width="15" height="14" viewBox="0 0 15 14"><path d="M1.2 1.2 H13.8 L8.6 7.2 V12.6 L6.4 11 V7.2 Z" fill="none" stroke="#555" stroke-width="1.5" stroke-linejoin="round"/></svg>
<svg style="position:absolute;left:437px;top:529px;" width="14" height="14" viewBox="0 0 14 14"><circle cx="7" cy="7" r="4.8" fill="none" stroke="#f04848" stroke-width="1.1"/><path d="M1.5 12.5 L12.5 1.5" stroke="#f04848" stroke-width="1.1"/></svg>
<svg style="position:absolute;left:460px;top:531px;" width="15" height="14" viewBox="0 0 15 14"><path d="M1.2 1.2 H13.8 L8.6 7.2 V12.6 L6.4 11 V7.2 Z" fill="none" stroke="#555" stroke-width="1.5" stroke-linejoin="round"/></svg>
<svg style="position:absolute;left:556px;top:531px;" width="15" height="14" viewBox="0 0 15 14"><path d="M1.2 1.2 H13.8 L8.6 7.2 V12.6 L6.4 11 V7.2 Z" fill="none" stroke="#555" stroke-width="1.5" stroke-linejoin="round"/></svg>
<svg style="position:absolute;left:677px;top:529px;" width="14" height="14" viewBox="0 0 14 14"><circle cx="7" cy="7" r="4.8" fill="none" stroke="#f04848" stroke-width="1.1"/><path d="M1.5 12.5 L12.5 1.5" stroke="#f04848" stroke-width="1.1"/></svg>
<svg style="position:absolute;left:700px;top:531px;" width="15" height="14" viewBox="0 0 15 14"><path d="M1.2 1.2 H13.8 L8.6 7.2 V12.6 L6.4 11 V7.2 Z" fill="none" stroke="#555" stroke-width="1.5" stroke-linejoin="round"/></svg>
<svg style="position:absolute;left:804px;top:529px;" width="14" height="14" viewBox="0 0 14 14"><circle cx="7" cy="7" r="4.8" fill="none" stroke="#f04848" stroke-width="1.1"/><path d="M1.5 12.5 L12.5 1.5" stroke="#f04848" stroke-width="1.1"/></svg>
<svg style="position:absolute;left:827px;top:531px;" width="15" height="14" viewBox="0 0 15 14"><path d="M1.2 1.2 H13.8 L8.6 7.2 V12.6 L6.4 11 V7.2 Z" fill="none" stroke="#555" stroke-width="1.5" stroke-linejoin="round"/></svg>
<svg style="position:absolute;left:949px;top:529px;" width="14" height="14" viewBox="0 0 14 14"><circle cx="7" cy="7" r="4.8" fill="none" stroke="#f04848" stroke-width="1.1"/><path d="M1.5 12.5 L12.5 1.5" stroke="#f04848" stroke-width="1.1"/></svg>
<svg style="position:absolute;left:972px;top:531px;" width="15" height="14" viewBox="0 0 15 14"><path d="M1.2 1.2 H13.8 L8.6 7.2 V12.6 L6.4 11 V7.2 Z" fill="none" stroke="#555" stroke-width="1.5" stroke-linejoin="round"/></svg>
<svg style="position:absolute;left:1112px;top:531px;" width="15" height="14" viewBox="0 0 15 14"><path d="M1.2 1.2 H13.8 L8.6 7.2 V12.6 L6.4 11 V7.2 Z" fill="none" stroke="#555" stroke-width="1.5" stroke-linejoin="round"/></svg>
<svg style="position:absolute;left:1341px;top:531px;" width="15" height="14" viewBox="0 0 15 14"><path d="M1.2 1.2 H13.8 L8.6 7.2 V12.6 L6.4 11 V7.2 Z" fill="none" stroke="#555" stroke-width="1.5" stroke-linejoin="round"/></svg>
<div style="left:0;top:0;width:1919px;height:1079px;clip-path:polygon(222px 556px, 1356px 556px, 1356px 990px, 222px 990px)">
<div style="left:233px;top:566px;width:8px;height:2px;border:1px solid #333"></div>
<svg style="position:absolute;left:273px;top:560px;" width="13" height="13" viewBox="0 0 13 13"><rect x="0.8" y="0.8" width="11.4" height="11.4" rx="2.6" fill="#fff" stroke="#6f6f6f" stroke-width="1.4"/></svg>
<div class="t" style="top:558.5px;height:20px;line-height:20px;font-size:13px;color:#333;font-weight:700;letter-spacing:1.22px;left:293.5px;">(2) AL251019-0003</div>
<div style="left:222px;top:581px;width:1134px;height:1px;background:#d6d6d6"></div>
<div style="left:222px;top:613px;width:1134px;height:0px;border-top:1px dotted #d2d2d2"></div>
<div style="left:263px;top:582px;width:0px;height:32px;border-left:1px dotted #d2d2d2"></div>
<div style="left:292px;top:582px;width:0px;height:32px;border-left:1px dotted #d2d2d2"></div>
<div style="left:455px;top:582px;width:0px;height:32px;border-left:1px dotted #d2d2d2"></div>
<div style="left:551px;top:582px;width:0px;height:32px;border-left:1px dotted #d2d2d2"></div>
<div style="left:695px;top:582px;width:0px;height:32px;border-left:1px dotted #d2d2d2"></div>
<div style="left:822px;top:582px;width:0px;height:32px;border-left:1px dotted #d2d2d2"></div>
<div style="left:967px;top:582px;width:0px;height:32px;border-left:1px dotted #d2d2d2"></div>
<div style="left:1107px;top:582px;width:0px;height:32px;border-left:1px dotted #d2d2d2"></div>
<div style="left:1336px;top:582px;width:0px;height:32px;border-left:1px dotted #d2d2d2"></div>
<div style="left:1600px;top:582px;width:0px;height:32px;border-left:1px dotted #d2d2d2"></div>
<div class="t" style="top:588.0px;height:20px;line-height:20px;font-size:13px;color:#333;left:223.0px;width:40px;text-align:center;">1</div>
<svg style="position:absolute;left:271px;top:590px;" width="15" height="15" viewBox="0 0 15 15"><rect x="0.8" y="0.8" width="13.4" height="13.4" rx="2.6" fill="#fff" stroke="#6f6f6f" stroke-width="1.4"/></svg>
<div class="t" style="top:588.0px;height:20px;line-height:20px;font-size:13px;color:#111;letter-spacing:0.3px;left:272.6px;width:203px;text-align:center;">909090</div>
<div class="t" style="top:588.0px;height:20px;line-height:20px;font-size:13px;color:#111;letter-spacing:0.3px;left:435.6px;width:136px;text-align:center;">909090</div>
<div class="t" style="top:588.0px;height:20px;line-height:20px;font-size:13px;color:#111;letter-spacing:0.3px;left:531.6px;width:184px;text-align:center;">PO251019-0003</div>
<div class="t" style="top:588.0px;height:20px;line-height:20px;font-size:13px;color:#111;letter-spacing:0.3px;left:675.6px;width:167px;text-align:center;">AL251019-0003</div>
<div class="t" style="top:588.0px;height:20px;line-height:20px;font-size:13px;color:#111;letter-spacing:0.3px;left:802.6px;width:185px;text-align:center;">FV-1600-600</div>
<div class="t" style="top:588.0px;height:20px;line-height:20px;font-size:13px;color:#111;letter-spacing:0.7px;left:947.8px;width:180px;text-align:center;">10/19/2025</div>
<div class="t" style="top:588.0px;height:20px;line-height:20px;font-size:13px;color:#111;letter-spacing:0.3px;left:1112px;">909090</div>
<div class="t" style="top:588.0px;height:20px;line-height:20px;font-size:13px;color:#111;left:1341px;">KU</div>
<div style="left:264px;top:614px;width:1092px;height:32px;background:#f5f5f5"></div>
<div style="left:222px;top:645px;width:1134px;height:0px;border-top:1px dotted #d2d2d2"></div>
<div style="left:263px;top:614px;width:0px;height:32px;border-left:1px dotted #d2d2d2"></div>
<div style="left:292px;top:614px;width:0px;height:32px;border-left:1px dotted #d2d2d2"></div>
<div style="left:455px;top:614px;width:0px;height:32px;border-left:1px dotted #d2d2d2"></div>
<div style="left:551px;top:614px;width:0px;height:32px;border-left:1px dotted #d2d2d2"></div>
<div style="left:695px;top:614px;width:0px;height:32px;border-left:1px dotted #d2d2d2"></div>
<div style="left:822px;top:614px;width:0px;height:32px;border-left:1px dotted #d2d2d2"></div>
<div style="left:967px;top:614px;width:0px;height:32px;border-left:1px dotted #d2d2d2"></div>
<div style="left:1107px;top:614px;width:0px;height:32px;border-left:1px dotted #d2d2d2"></div>
<div style="left:1336px;top:614px;width:0px;height:32px;border-left:1px dotted #d2d2d2"></div>
<div style="left:1600px;top:614px;width:0px;height:32px;border-left:1px dotted #d2d2d2"></div>
<div class="t" style="top:620.0px;height:20px;line-height:20px;font-size:13px;color:#333;left:223.0px;width:40px;text-align:center;">2</div>
<svg style="position:absolute;left:271px;top:622px;" width="15" height="15" viewBox="0 0 15 15"><rect x="0.8" y="0.8" width="13.4" height="13.4" rx="2.6" fill="#fff" stroke="#6f6f6f" stroke-width="1.4"/></svg>
<div class="t" style="top:620.0px;height:20px;line-height:20px;font-size:13px;color:#111;letter-spacing:0.3px;left:272.6px;width:203px;text-align:center;">909090</div>
<div class="t" style="top:620.0px;height:20px;line-height:20px;font-size:13px;color:#111;letter-spacing:0.3px;left:435.6px;width:136px;text-align:center;">909090</div>
<div class="t" style="top:620.0px;height:20px;line-height:20px;font-size:13px;color:#111;letter-spacing:0.3px;left:531.6px;width:184px;text-align:center;">PO251019-0003</div>
<div class="t" style="top:620.0px;height:20px;line-height:20px;font-size:13px;color:#111;letter-spacing:0.3px;left:675.6px;width:167px;text-align:center;">AL251019-0003</div>
<div class="t" style="top:620.0px;height:20px;line-height:20px;font-size:13px;color:#111;letter-spacing:0.3px;left:802.6px;width:185px;text-align:center;">FV-1600-600</div>
<div class="t" style="top:620.0px;height:20px;line-height:20px;font-size:13px;color:#111;letter-spacing:0.7px;left:947.8px;width:180px;text-align:center;">10/19/2025</div>
<div class="t" style="top:620.0px;height:20px;line-height:20px;font-size:13px;color:#111;letter-spacing:0.3px;left:1112px;">909090</div>
<div class="t" style="top:620.0px;height:20px;line-height:20px;font-size:13px;color:#111;left:1341px;">KU</div>
<div style="left:233px;top:656px;width:8px;height:2px;border:1px solid #333"></div>
<svg style="position:absolute;left:273px;top:650px;" width="13" height="13" viewBox="0 0 13 13"><rect x="0.8" y="0.8" width="11.4" height="11.4" rx="2.6" fill="#fff" stroke="#6f6f6f" stroke-width="1.4"/></svg>
<div class="t" style="top:648.5px;height:20px;line-height:20px;font-size:13px;color:#333;font-weight:700;letter-spacing:1.22px;left:293.5px;">(1) AL251009-0005</div>
<div style="left:222px;top:671px;width:1134px;height:1px;background:#d6d6d6"></div>
<div style="left:222px;top:703px;width:1134px;height:0px;border-top:1px dotted #d2d2d2"></div>
<div style="left:263px;top:672px;width:0px;height:32px;border-left:1px dotted #d2d2d2"></div>
<div style="left:292px;top:672px;width:0px;height:32px;border-left:1px dotted #d2d2d2"></div>
<div style="left:455px;top:672px;width:0px;height:32px;border-left:1px dotted #d2d2d2"></div>
<div style="left:551px;top:672px;width:0px;height:32px;border-left:1px dotted #d2d2d2"></div>
<div style="left:695px;top:672px;width:0px;height:32px;border-left:1px dotted #d2d2d2"></div>
<div style="left:822px;top:672px;width:0px;height:32px;border-left:1px dotted #d2d2d2"></div>
<div style="left:967px;top:672px;width:0px;height:32px;border-left:1px dotted #d2d2d2"></div>
<div style="left:1107px;top:672px;width:0px;height:32px;border-left:1px dotted #d2d2d2"></div>
<div style="left:1336px;top:672px;width:0px;height:32px;border-left:1px dotted #d2d2d2"></div>
<div style="left:1600px;top:672px;width:0px;height:32px;border-left:1px dotted #d2d2d2"></div>
<div class="t" style="top:678.0px;height:20px;line-height:20px;font-size:13px;color:#333;left:223.0px;width:40px;text-align:center;">3</div>
<svg style="position:absolute;left:271px;top:680px;" width="15" height="15" viewBox="0 0 15 15"><rect x="0.8" y="0.8" width="13.4" height="13.4" rx="2.6" fill="#fff" stroke="#6f6f6f" stroke-width="1.4"/></svg>
<div class="t" style="top:678.0px;height:20px;line-height:20px;font-size:13px;color:#111;letter-spacing:0.3px;left:272.6px;width:203px;text-align:center;">2104229000006</div>
<div class="t" style="top:678.0px;height:20px;line-height:20px;font-size:13px;color:#111;letter-spacing:0.3px;left:435.6px;width:136px;text-align:center;">2548</div>
<div class="t" style="top:678.0px;height:20px;line-height:20px;font-size:13px;color:#111;letter-spacing:0.3px;left:531.6px;width:184px;text-align:center;">PO251009-0005</div>
<div class="t" style="top:678.0px;height:20px;line-height:20px;font-size:13px;color:#111;letter-spacing:0.3px;left:675.6px;width:167px;text-align:center;">AL251009-0005</div>
<div class="t" style="top:678.0px;height:20px;line-height:20px;font-size:13px;color:#111;left:802.5px;width:185px;text-align:center;">new</div>
<div class="t" style="top:678.0px;height:20px;line-height:20px;font-size:13px;color:#111;letter-spacing:0.7px;left:947.8px;width:180px;text-align:center;">10/9/2025</div>
<div class="t" style="top:678.0px;height:20px;line-height:20px;font-size:13px;color:#111;letter-spacing:-0.25px;left:1112px;">TOMATOES PINK (BDFV)</div>
<div class="t" style="top:678.0px;height:20px;line-height:20px;font-size:13px;color:#111;left:1341px;">WO</div>
<div style="left:233px;top:714px;width:8px;height:2px;border:1px solid #333"></div>
<svg style="position:absolute;left:273px;top:708px;" width="13" height="13" viewBox="0 0 13 13"><rect x="0.8" y="0.8" width="11.4" height="11.4" rx="2.6" fill="#fff" stroke="#6f6f6f" stroke-width="1.4"/></svg>
<div class="t" style="top:706.5px;height:20px;line-height:20px;font-size:13px;color:#333;font-weight:700;letter-spacing:1.22px;left:293.5px;">(1) AL251009-0003</div>
<div style="left:222px;top:729px;width:1134px;height:1px;background:#d6d6d6"></div>
<div style="left:264px;top:730px;width:1092px;height:32px;background:#f5f5f5"></div>
<div style="left:222px;top:761px;width:1134px;height:0px;border-top:1px dotted #d2d2d2"></div>
<div style="left:263px;top:730px;width:0px;height:32px;border-left:1px dotted #d2d2d2"></div>
<div style="left:292px;top:730px;width:0px;height:32px;border-left:1px dotted #d2d2d2"></div>
<div style="left:455px;top:730px;width:0px;height:32px;border-left:1px dotted #d2d2d2"></div>
<div style="left:551px;top:730px;width:0px;height:32px;border-left:1px dotted #d2d2d2"></div>
<div style="left:695px;top:730px;width:0px;height:32px;border-left:1px dotted #d2d2d2"></div>
<div style="left:822px;top:730px;width:0px;height:32px;border-left:1px dotted #d2d2d2"></div>
<div style="left:967px;top:730px;width:0px;height:32px;border-left:1px dotted #d2d2d2"></div>
<div style="left:1107px;top:730px;width:0px;height:32px;border-left:1px dotted #d2d2d2"></div>
<div style="left:1336px;top:730px;width:0px;height:32px;border-left:1px dotted #d2d2d2"></div>
<div style="left:1600px;top:730px;width:0px;height:32px;border-left:1px dotted #d2d2d2"></div>
<div class="t" style="top:736.0px;height:20px;line-height:20px;font-size:13px;color:#333;left:223.0px;width:40px;text-align:center;">4</div>
<svg style="position:absolute;left:271px;top:738px;" width="15" height="15" viewBox="0 0 15 15"><rect x="0.8" y="0.8" width="13.4" height="13.4" rx="2.6" fill="#fff" stroke="#6f6f6f" stroke-width="1.4"/></svg>
<div class="t" style="top:736.0px;height:20px;line-height:20px;font-size:13px;color:#111;letter-spacing:0.3px;left:272.6px;width:203px;text-align:center;">2104222000003</div>
<div class="t" style="top:736.0px;height:20px;line-height:20px;font-size:13px;color:#111;letter-spacing:0.3px;left:435.6px;width:136px;text-align:center;">5795</div>
<div class="t" style="top:736.0px;height:20px;line-height:20px;font-size:13px;color:#111;letter-spacing:0.3px;left:531.6px;width:184px;text-align:center;">PO251009-0003</div>
<div class="t" style="top:736.0px;height:20px;line-height:20px;font-size:13px;color:#111;letter-spacing:0.3px;left:675.6px;width:167px;text-align:center;">AL251009-0003</div>
<div class="t" style="top:736.0px;height:20px;line-height:20px;font-size:13px;color:#111;left:802.5px;width:185px;text-align:center;">retttt</div>
<div class="t" style="top:736.0px;height:20px;line-height:20px;font-size:13px;color:#111;letter-spacing:0.7px;left:947.8px;width:180px;text-align:center;">10/9/2025</div>
<div class="t" style="top:736.0px;height:20px;line-height:20px;font-size:13px;color:#111;letter-spacing:-0.25px;left:1112px;">CORN-KG (BDFV)</div>
<div class="t" style="top:736.0px;height:20px;line-height:20px;font-size:13px;color:#111;left:1341px;">WO</div>
<div style="left:233px;top:772px;width:8px;height:2px;border:1px solid #333"></div>
<svg style="position:absolute;left:273px;top:766px;" width="13" height="13" viewBox="0 0 13 13"><rect x="0.8" y="0.8" width="11.4" height="11.4" rx="2.6" fill="#fff" stroke="#6f6f6f" stroke-width="1.4"/></svg>
<div class="t" style="top:764.5px;height:20px;line-height:20px;font-size:13px;color:#333;font-weight:700;letter-spacing:1.22px;left:293.5px;">(1) AL251008-0007</div>
<div style="left:222px;top:787px;width:1134px;height:1px;background:#d6d6d6"></div>
<div style="left:222px;top:819px;width:1134px;height:0px;border-top:1px dotted #d2d2d2"></div>
<div style="left:263px;top:788px;width:0px;height:32px;border-left:1px dotted #d2d2d2"></div>
<div style="left:292px;top:788px;width:0px;height:32px;border-left:1px dotted #d2d2d2"></div>
<div style="left:455px;top:788px;width:0px;height:32px;border-left:1px dotted #d2d2d2"></div>
<div style="left:551px;top:788px;width:0px;height:32px;border-left:1px dotted #d2d2d2"></div>
<div style="left:695px;top:788px;width:0px;height:32px;border-left:1px dotted #d2d2d2"></div>
<div style="left:822px;top:788px;width:0px;height:32px;border-left:1px dotted #d2d2d2"></div>
<div style="left:967px;top:788px;width:0px;height:32px;border-left:1px dotted #d2d2d2"></div>
<div style="left:1107px;top:788px;width:0px;height:32px;border-left:1px dotted #d2d2d2"></div>
<div style="left:1336px;top:788px;width:0px;height:32px;border-left:1px dotted #d2d2d2"></div>
<div style="left:1600px;top:788px;width:0px;height:32px;border-left:1px dotted #d2d2d2"></div>
<div class="t" style="top:794.0px;height:20px;line-height:20px;font-size:13px;color:#333;left:223.0px;width:40px;text-align:center;">5</div>
<svg style="position:absolute;left:271px;top:796px;" width="15" height="15" viewBox="0 0 15 15"><rect x="0.8" y="0.8" width="13.4" height="13.4" rx="2.6" fill="#fff" stroke="#6f6f6f" stroke-width="1.4"/></svg>
<div class="t" style="top:794.0px;height:20px;line-height:20px;font-size:13px;color:#111;letter-spacing:0.3px;left:272.6px;width:203px;text-align:center;">2104229000006</div>
<div class="t" style="top:794.0px;height:20px;line-height:20px;font-size:13px;color:#111;letter-spacing:0.3px;left:435.6px;width:136px;text-align:center;">2548</div>
<div class="t" style="top:794.0px;height:20px;line-height:20px;font-size:13px;color:#111;letter-spacing:0.3px;left:531.6px;width:184px;text-align:center;">PO251008-0006</div>
<div class="t" style="top:794.0px;height:20px;line-height:20px;font-size:13px;color:#111;letter-spacing:0.3px;left:675.6px;width:167px;text-align:center;">AL251008-0007</div>
<div class="t" style="top:794.0px;height:20px;line-height:20px;font-size:13px;color:#111;letter-spacing:0.3px;left:802.6px;width:185px;text-align:center;">7878</div>
<div class="t" style="top:794.0px;height:20px;line-height:20px;font-size:13px;color:#111;letter-spacing:0.7px;left:947.8px;width:180px;text-align:center;">10/8/2025</div>
<div class="t" style="top:794.0px;height:20px;line-height:20px;font-size:13px;color:#111;letter-spacing:-0.25px;left:1112px;">TOMATOES PINK (BDFV)</div>
<div class="t" style="top:794.0px;height:20px;line-height:20px;font-size:13px;color:#111;left:1341px;">WO</div>
<div style="left:233px;top:830px;width:8px;height:2px;border:1px solid #333"></div>
<svg style="position:absolute;left:273px;top:824px;" width="13" height="13" viewBox="0 0 13 13"><rect x="0.8" y="0.8" width="11.4" height="11.4" rx="2.6" fill="#fff" stroke="#6f6f6f" stroke-width="1.4"/></svg>
<div class="t" style="top:822.5px;height:20px;line-height:20px;font-size:13px;color:#333;font-weight:700;letter-spacing:1.22px;left:293.5px;">(2) AL250929-0012</div>
<div style="left:222px;top:845px;width:1134px;height:1px;background:#d6d6d6"></div>
<div style="left:264px;top:846px;width:1092px;height:32px;background:#f5f5f5"></div>
<div style="left:222px;top:877px;width:1134px;height:0px;border-top:1px dotted #d2d2d2"></div>
<div style="left:263px;top:846px;width:0px;height:32px;border-left:1px dotted #d2d2d2"></div>
<div style="left:292px;top:846px;width:0px;height:32px;border-left:1px dotted #d2d2d2"></div>
<div style="left:455px;top:846px;width:0px;height:32px;border-left:1px dotted #d2d2d2"></div>
<div style="left:551px;top:846px;width:0px;height:32px;border-left:1px dotted #d2d2d2"></div>
<div style="left:695px;top:846px;width:0px;height:32px;border-left:1px dotted #d2d2d2"></div>
<div style="left:822px;top:846px;width:0px;height:32px;border-left:1px dotted #d2d2d2"></div>
<div style="left:967px;top:846px;width:0px;height:32px;border-left:1px dotted #d2d2d2"></div>
<div style="left:1107px;top:846px;width:0px;height:32px;border-left:1px dotted #d2d2d2"></div>
<div style="left:1336px;top:846px;width:0px;height:32px;border-left:1px dotted #d2d2d2"></div>
<div style="left:1600px;top:846px;width:0px;height:32px;border-left:1px dotted #d2d2d2"></div>
<div class="t" style="top:852.0px;height:20px;line-height:20px;font-size:13px;color:#333;left:223.0px;width:40px;text-align:center;">6</div>
<svg style="position:absolute;left:271px;top:854px;" width="15" height="15" viewBox="0 0 15 15"><rect x="0.8" y="0.8" width="13.4" height="13.4" rx="2.6" fill="#fff" stroke="#6f6f6f" stroke-width="1.4"/></svg>
<div class="t" style="top:852.0px;height:20px;line-height:20px;font-size:13px;color:#111;letter-spacing:0.3px;left:272.6px;width:203px;text-align:center;">2104229000006</div>
<div class="t" style="top:852.0px;height:20px;line-height:20px;font-size:13px;color:#111;letter-spacing:0.3px;left:435.6px;width:136px;text-align:center;">2548</div>
<div class="t" style="top:852.0px;height:20px;line-height:20px;font-size:13px;color:#111;letter-spacing:0.3px;left:531.6px;width:184px;text-align:center;">PO250929-0012</div>
<div class="t" style="top:852.0px;height:20px;line-height:20px;font-size:13px;color:#111;letter-spacing:0.3px;left:675.6px;width:167px;text-align:center;">AL250929-0012</div>
<div class="t" style="top:852.0px;height:20px;line-height:20px;font-size:13px;color:#111;letter-spacing:0.3px;left:802.6px;width:185px;text-align:center;">BDFV-2909-004</div>
<div class="t" style="top:852.0px;height:20px;line-height:20px;font-size:13px;color:#111;letter-spacing:0.7px;left:947.8px;width:180px;text-align:center;">9/29/2025</div>
<div class="t" style="top:852.0px;height:20px;line-height:20px;font-size:13px;color:#111;letter-spacing:-0.25px;left:1112px;">TOMATOES PINK (BDFV)</div>
<div class="t" style="top:852.0px;height:20px;line-height:20px;font-size:13px;color:#111;left:1341px;">JEO</div>
<div style="left:222px;top:909px;width:1134px;height:0px;border-top:1px dotted #d2d2d2"></div>
<div style="left:263px;top:878px;width:0px;height:32px;border-left:1px dotted #d2d2d2"></div>
<div style="left:292px;top:878px;width:0px;height:32px;border-left:1px dotted #d2d2d2"></div>
<div style="left:455px;top:878px;width:0px;height:32px;border-left:1px dotted #d2d2d2"></div>
<div style="left:551px;top:878px;width:0px;height:32px;border-left:1px dotted #d2d2d2"></div>
<div style="left:695px;top:878px;width:0px;height:32px;border-left:1px dotted #d2d2d2"></div>
<div style="left:822px;top:878px;width:0px;height:32px;border-left:1px dotted #d2d2d2"></div>
<div style="left:967px;top:878px;width:0px;height:32px;border-left:1px dotted #d2d2d2"></div>
<div style="left:1107px;top:878px;width:0px;height:32px;border-left:1px dotted #d2d2d2"></div>
<div style="left:1336px;top:878px;width:0px;height:32px;border-left:1px dotted #d2d2d2"></div>
<div style="left:1600px;top:878px;width:0px;height:32px;border-left:1px dotted #d2d2d2"></div>
<div class="t" style="top:884.0px;height:20px;line-height:20px;font-size:13px;color:#333;left:223.0px;width:40px;text-align:center;">7</div>
<svg style="position:absolute;left:271px;top:886px;" width="15" height="15" viewBox="0 0 15 15"><rect x="0.8" y="0.8" width="13.4" height="13.4" rx="2.6" fill="#fff" stroke="#6f6f6f" stroke-width="1.4"/></svg>
<div class="t" style="top:884.0px;height:20px;line-height:20px;font-size:13px;color:#111;letter-spacing:0.3px;left:272.6px;width:203px;text-align:center;">2104229000006</div>
<div class="t" style="top:884.0px;height:20px;line-height:20px;font-size:13px;color:#111;letter-spacing:0.3px;left:435.6px;width:136px;text-align:center;">2548</div>
<div class="t" style="top:884.0px;height:20px;line-height:20px;font-size:13px;color:#111;letter-spacing:0.3px;left:531.6px;width:184px;text-align:center;">PO250929-0012</div>
<div class="t" style="top:884.0px;height:20px;line-height:20px;font-size:13px;color:#111;letter-spacing:0.3px;left:675.6px;width:167px;text-align:center;">AL250929-0012</div>
<div class="t" style="top:884.0px;height:20px;line-height:20px;font-size:13px;color:#111;letter-spacing:0.3px;left:802.6px;width:185px;text-align:center;">BDFV-2909-004</div>
<div class="t" style="top:884.0px;height:20px;line-height:20px;font-size:13px;color:#111;letter-spacing:0.7px;left:947.8px;width:180px;text-align:center;">9/29/2025</div>
<div class="t" style="top:884.0px;height:20px;line-height:20px;font-size:13px;color:#111;letter-spacing:-0.25px;left:1112px;">TOMATOES PINK (BDFV)</div>
<div class="t" style="top:884.0px;height:20px;line-height:20px;font-size:13px;color:#111;left:1341px;">JEO</div>
</div>
</div>
<div style="left:265px;top:988px;width:1091px;height:14px;background:#f8f8f8"></div>
<svg style="position:absolute;left:269px;top:991px;" width="8" height="8" viewBox="0 0 8 8"><path d="M7.5 0 L0.5 4 L7.5 8 Z" fill="#8a8a8a"/></svg>
<svg style="position:absolute;left:1343px;top:991px;" width="8" height="8" viewBox="0 0 8 8"><path d="M0.5 0 L7.5 4 L0.5 8 Z" fill="#8a8a8a"/></svg>
<div style="left:283px;top:990.5px;width:833px;height:9px;background:#8a8a8a;border-radius:5px"></div>
<div style="left:223px;top:1003px;width:1133px;height:3px;background:#d2d2d2"></div>
<div style="left:229px;top:1010px;width:46px;height:20px;border:1px solid #dcdcdc;background:#fff"></div>
<div class="t" style="top:1011.5px;height:20px;line-height:20px;font-size:14px;color:#000;left:236px;">20</div>
<svg style="position:absolute;left:264px;top:1018.0px;" width="10" height="7" viewBox="0 0 10 7"><path d="M1 1 L5 5 L9 1" fill="none" stroke="#111" stroke-width="2"/></svg>
<div style="left:284px;top:1010px;width:1px;height:23px;background:#e3e3e3"></div>
<div style="left:340px;top:1010px;width:1px;height:23px;background:#e3e3e3"></div>
<div style="left:442px;top:1010px;width:1px;height:23px;background:#e3e3e3"></div>
<div style="left:498px;top:1010px;width:1px;height:23px;background:#e3e3e3"></div>
<div style="left:528px;top:1010px;width:1px;height:23px;background:#e3e3e3"></div>
<svg style="position:absolute;left:295px;top:1015px;" width="10" height="12" viewBox="0 0 10 12"><rect x="1" y="1" width="2" height="10" fill="#8f8f8f"/><path d="M9 1 L4 6 L9 11 Z" fill="#8f8f8f"/></svg>
<svg style="position:absolute;left:322px;top:1015px;" width="8" height="12" viewBox="0 0 8 12"><path d="M7 1 L1 6 L7 11 Z" fill="#8f8f8f"/></svg>
<svg style="position:absolute;left:454px;top:1015px;" width="8" height="12" viewBox="0 0 8 12"><path d="M1 1 L7 6 L1 11 Z" fill="#8f8f8f"/></svg>
<svg style="position:absolute;left:479px;top:1015px;" width="10" height="12" viewBox="0 0 10 12"><path d="M1 1 L6 6 L1 11 Z" fill="#8f8f8f"/><rect x="7" y="1" width="2" height="10" fill="#8f8f8f"/></svg>
<svg style="position:absolute;left:507.5px;top:1014px;" width="13" height="13" viewBox="0 0 13 13"><path d="M9.6 4.6 A4.9 4.9 0 1 1 6.3 2.6" fill="none" stroke="#4a4545" stroke-width="1.4"/><path d="M5.4 0.2 L9.6 2.5 L5.6 4.8 Z" fill="#4a4545"/></svg>
<div class="t" style="top:1011.5px;height:20px;line-height:20px;font-size:13px;color:#333;letter-spacing:-0.4px;left:349.5px;">Page</div>
<div style="left:380px;top:1011px;width:28px;height:19px;border:1px solid #dedede;background:#fff"></div>
<div class="t" style="top:1011.5px;height:20px;line-height:20px;font-size:13px;color:#111;left:382px;">1</div>
<div class="t" style="top:1011.5px;height:20px;line-height:20px;font-size:13px;color:#333;letter-spacing:0.3px;left:412px;">of 1</div>
<div style="left:538px;top:1020px;width:13px;height:3px;background:#f02020"></div>
<svg style="position:absolute;left:565px;top:1014px;" width="13" height="15" viewBox="0 0 13 15"><path d="M1.4 2 Q1.4 0.9 2.5 0.9 H7.6 L11.5 4.8 V13 Q11.5 14.1 10.4 14.1 H2.5 Q1.4 14.1 1.4 13 Z" fill="none" stroke="#238a62" stroke-width="1.2"/><path d="M7.3 1.2 V3.8 Q7.3 5 8.5 5 H11.3" fill="none" stroke="#238a62" stroke-width="1.1"/><path d="M4.6 7.6 L8.2 11.6 M8.2 7.6 L4.6 11.6" stroke="#238a62" stroke-width="1.2"/></svg>
<div style="left:1076px;top:1006px;width:1px;height:30px;background:#e3e3e3"></div>
<div style="left:1172px;top:1006px;width:1px;height:30px;background:#e3e3e3"></div>
<div class="t" style="top:1010.5px;height:20px;line-height:20px;font-size:13px;color:#555;letter-spacing:0.3px;left:948.5px;width:120px;text-align:right;">Groups: 0</div>
<div class="t" style="top:1010.5px;height:20px;line-height:20px;font-size:13px;color:#3f8ee0;letter-spacing:0.3px;left:1044.5px;width:120px;text-align:right;">Selected: 0</div>
<div class="t" style="top:1010.5px;height:20px;line-height:20px;font-size:13px;color:#333;letter-spacing:0.38px;left:1090.0px;width:260px;text-align:right;">Displaying 1 to 7 of 7 items</div>
<div style="left:1364px;top:39px;width:2px;height:1000px;background:#dcdcdc"></div>
<div style="left:1364px;top:39px;width:555px;height:2px;background:#dcdcdc"></div>
<div style="left:1918px;top:39px;width:1px;height:1000px;background:#dcdcdc"></div>
<div style="left:1364px;top:1037px;width:555px;height:2px;background:#dcdcdc"></div>
<div style="left:1366px;top:67px;width:552px;height:1px;background:#e2e2e2"></div>
<div class="t" style="top:44.5px;height:20px;line-height:20px;font-size:13.5px;color:#000;letter-spacing:0.447px;left:1371.6px;">Worker</div>
<div class="t" style="top:45.5px;height:20px;line-height:20px;font-size:12px;color:#666;letter-spacing:0.1px;left:1772px;">Default</div>
<svg style="position:absolute;left:1818px;top:56px;" width="8" height="5" viewBox="0 0 8 5"><path d="M0 0 L8 0 L4.0 5 Z" fill="#111"/></svg>
<svg style="position:absolute;left:1840px;top:46px;" width="16" height="16" viewBox="0 0 16 16"><circle cx="8" cy="8" r="8" fill="#666"/><path d="M8 4.6 V11.4 M4.6 8 H11.4" stroke="#fff" stroke-width="1.6"/></svg>
<svg style="position:absolute;left:1866px;top:46px;" width="16" height="16" viewBox="0 0 16 16"><circle cx="8" cy="8" r="8" fill="#666"/><rect x="7.2" y="6.8" width="1.7" height="5" fill="#fff"/><rect x="6" y="11.2" width="4.2" height="1.1" fill="#fff"/><rect x="6.3" y="6.8" width="1.6" height="0.9" fill="#fff"/><circle cx="8.1" cy="4.6" r="1" fill="#fff"/></svg>
<svg style="position:absolute;left:1892px;top:48px;" width="16" height="14" viewBox="0 0 16 14"><path d="M0.5 0.5 H15.5 L9.6 6.6 V13.5 L6.4 11 V6.6 Z" fill="#666"/></svg>
<div style="left:1407px;top:68px;width:0px;height:62px;border-left:1px dotted #d2d2d2"></div>
<div style="left:1638px;top:68px;width:0px;height:62px;border-left:1px dotted #d2d2d2"></div>
<div style="left:1743px;top:68px;width:0px;height:62px;border-left:1px dotted #d2d2d2"></div>
<div style="left:1407px;top:99px;width:336px;height:0px;border-top:1px dotted #d2d2d2"></div>
<div style="left:1366px;top:130px;width:552px;height:1px;background:#dcdcdc"></div>
<div class="t" style="top:74.0px;height:20px;line-height:20px;font-size:13px;color:#000;left:1412px;">Fullname</div>
<svg style="position:absolute;left:1469.46875px;top:78px;" width="9" height="12" viewBox="0 0 9 12"><path d="M4.5 0.5 L8.5 5 L0.5 5 Z M0.5 7 L8.5 7 L4.5 11.5 Z" fill="#c4c4c4"/></svg>
<div class="t" style="top:74.0px;height:20px;line-height:20px;font-size:13px;color:#000;left:1652.5703125px;">Assign Qty</div>
<svg style="position:absolute;left:1719.4296875px;top:78px;" width="9" height="12" viewBox="0 0 9 12"><path d="M4.5 0.5 L8.5 5 L0.5 5 Z M0.5 7 L8.5 7 L4.5 11.5 Z" fill="#c4c4c4"/></svg>
<svg style="position:absolute;left:1412px;top:106px;" width="15" height="14" viewBox="0 0 15 14"><path d="M1.2 1.2 H13.8 L8.6 7.2 V12.6 L6.4 11 V7.2 Z" fill="none" stroke="#555" stroke-width="1.5" stroke-linejoin="round"/></svg>
<svg style="position:absolute;left:1643px;top:108px;" width="15" height="14" viewBox="0 0 15 14"><path d="M1.2 1.2 H13.8 L8.6 7.2 V12.6 L6.4 11 V7.2 Z" fill="none" stroke="#555" stroke-width="1.5" stroke-linejoin="round"/></svg>
<svg style="position:absolute;left:1724px;top:106px;" width="14" height="14" viewBox="0 0 14 14"><circle cx="7" cy="7" r="4.8" fill="none" stroke="#f04848" stroke-width="1.1"/><path d="M1.5 12.5 L12.5 1.5" stroke="#f04848" stroke-width="1.1"/></svg>
<div style="left:1366px;top:162px;width:377px;height:0px;border-top:1px dotted #d2d2d2"></div>
<div style="left:1407px;top:131px;width:0px;height:32px;border-left:1px dotted #d2d2d2"></div>
<div style="left:1638px;top:131px;width:0px;height:32px;border-left:1px dotted #d2d2d2"></div>
<div style="left:1743px;top:131px;width:0px;height:32px;border-left:1px dotted #d2d2d2"></div>
<div class="t" style="top:137.0px;height:20px;line-height:20px;font-size:13px;color:#333;left:1366.5px;width:40px;text-align:center;">1</div>
<div class="t" style="top:137.0px;height:20px;line-height:20px;font-size:13px;color:#111;letter-spacing:0.1px;left:1412px;">azizeh alishahi</div>
<div class="t" style="top:137.0px;height:20px;line-height:20px;font-size:13px;color:#111;left:1660.5px;width:60px;text-align:center;">0</div>
<div style="left:1408px;top:163px;width:335px;height:31px;background:#f5f5f5"></div>
<div style="left:1366px;top:194px;width:377px;height:0px;border-top:1px dotted #d2d2d2"></div>
<div style="left:1407px;top:163px;width:0px;height:32px;border-left:1px dotted #d2d2d2"></div>
<div style="left:1638px;top:163px;width:0px;height:32px;border-left:1px dotted #d2d2d2"></div>
<div style="left:1743px;top:163px;width:0px;height:32px;border-left:1px dotted #d2d2d2"></div>
<div class="t" style="top:169.0px;height:20px;line-height:20px;font-size:13px;color:#333;left:1366.5px;width:40px;text-align:center;">2</div>
<div class="t" style="top:169.0px;height:20px;line-height:20px;font-size:13px;color:#111;letter-spacing:0.1px;left:1412px;">bf worker2</div>
<div class="t" style="top:169.0px;height:20px;line-height:20px;font-size:13px;color:#111;left:1660.5px;width:60px;text-align:center;">0</div>
<div style="left:1408px;top:195px;width:335px;height:31px;background:#fde38a"></div>
<div style="left:1366px;top:226px;width:377px;height:0px;border-top:1px dotted #d2d2d2"></div>
<div style="left:1407px;top:195px;width:0px;height:32px;border-left:1px dotted #d2d2d2"></div>
<div style="left:1638px;top:195px;width:0px;height:32px;border-left:1px dotted #d2d2d2"></div>
<div style="left:1743px;top:195px;width:0px;height:32px;border-left:1px dotted #d2d2d2"></div>
<div class="t" style="top:201.0px;height:20px;line-height:20px;font-size:13px;color:#333;left:1366.5px;width:40px;text-align:center;">3</div>
<div class="t" style="top:201.0px;height:20px;line-height:20px;font-size:13px;color:#111;letter-spacing:0.1px;left:1412px;">bf worker</div>
<div class="t" style="top:201.0px;height:20px;line-height:20px;font-size:13px;color:#111;left:1660.5px;width:60px;text-align:center;">7</div>
<div style="left:1370px;top:192px;width:369px;height:31px;border:3px solid #ff0000"></div>
<div style="left:1366px;top:1004px;width:552px;height:3px;background:#d2d2d2"></div>
<div style="left:1372px;top:1011px;width:46px;height:20px;border:1px solid #dcdcdc;background:#fff"></div>
<div class="t" style="top:1012.5px;height:20px;line-height:20px;font-size:14px;color:#000;left:1379px;">20</div>
<svg style="position:absolute;left:1407px;top:1019.0px;" width="10" height="7" viewBox="0 0 10 7"><path d="M1 1 L5 5 L9 1" fill="none" stroke="#111" stroke-width="2"/></svg>
<div style="left:1427px;top:1011px;width:1px;height:23px;background:#e3e3e3"></div>
<div style="left:1483px;top:1011px;width:1px;height:23px;background:#e3e3e3"></div>
<div style="left:1585px;top:1011px;width:1px;height:23px;background:#e3e3e3"></div>
<div style="left:1641px;top:1011px;width:1px;height:23px;background:#e3e3e3"></div>
<div style="left:1671px;top:1011px;width:1px;height:23px;background:#e3e3e3"></div>
<svg style="position:absolute;left:1438px;top:1016px;" width="10" height="12" viewBox="0 0 10 12"><rect x="1" y="1" width="2" height="10" fill="#8f8f8f"/><path d="M9 1 L4 6 L9 11 Z" fill="#8f8f8f"/></svg>
<svg style="position:absolute;left:1465px;top:1016px;" width="8" height="12" viewBox="0 0 8 12"><path d="M7 1 L1 6 L7 11 Z" fill="#8f8f8f"/></svg>
<svg style="position:absolute;left:1597px;top:1016px;" width="8" height="12" viewBox="0 0 8 12"><path d="M1 1 L7 6 L1 11 Z" fill="#8f8f8f"/></svg>
<svg style="position:absolute;left:1622px;top:1016px;" width="10" height="12" viewBox="0 0 10 12"><path d="M1 1 L6 6 L1 11 Z" fill="#8f8f8f"/><rect x="7" y="1" width="2" height="10" fill="#8f8f8f"/></svg>
<svg style="position:absolute;left:1650.5px;top:1015px;" width="13" height="13" viewBox="0 0 13 13"><path d="M9.6 4.6 A4.9 4.9 0 1 1 6.3 2.6" fill="none" stroke="#4a4545" stroke-width="1.4"/><path d="M5.4 0.2 L9.6 2.5 L5.6 4.8 Z" fill="#4a4545"/></svg>
<div class="t" style="top:1012.5px;height:20px;line-height:20px;font-size:13px;color:#333;letter-spacing:-0.4px;left:1492.5px;">Page</div>
<div style="left:1523px;top:1012px;width:28px;height:19px;border:1px solid #dedede;background:#fff"></div>
<div class="t" style="top:1012.5px;height:20px;line-height:20px;font-size:13px;color:#111;left:1525px;">1</div>
<div class="t" style="top:1012.5px;height:20px;line-height:20px;font-size:13px;color:#333;letter-spacing:0.3px;left:1555px;">of 1</div>
<svg style="position:absolute;left:1683px;top:1015px;" width="13" height="15" viewBox="0 0 13 15"><path d="M1.4 2 Q1.4 0.9 2.5 0.9 H7.6 L11.5 4.8 V13 Q11.5 14.1 10.4 14.1 H2.5 Q1.4 14.1 1.4 13 Z" fill="none" stroke="#238a62" stroke-width="1.2"/><path d="M7.3 1.2 V3.8 Q7.3 5 8.5 5 H11.3" fill="none" stroke="#238a62" stroke-width="1.1"/><path d="M4.6 7.6 L8.2 11.6 M8.2 7.6 L4.6 11.6" stroke="#238a62" stroke-width="1.2"/></svg>
<div class="t" style="top:1011.5px;height:20px;line-height:20px;font-size:13px;color:#333;letter-spacing:0.38px;left:1651.0px;width:260px;text-align:right;">Displaying 1 to 3 of 3 items</div>
<svg style="position:absolute;left:210px;top:200px;" width="64" height="52" viewBox="0 0 64 52"><path d="M7 45.9 L45 17.5" stroke="#ff0000" stroke-width="2.6" stroke-linecap="butt"/><path d="M57.8 8.1 L39.2 16.1 L44.8 23.4 Z" fill="#ff0000"/></svg>
<svg style="position:absolute;left:1425px;top:228px;" width="60" height="46" viewBox="0 0 60 46"><path d="M52.2 39.8 L22 16" stroke="#ff0000" stroke-width="2.6"/><path d="M7 6 L25.8 14.4 L20 21.5 Z" fill="#ff0000"/></svg>
<svg style="position:absolute;left:226px;top:1043px;" width="28" height="36" viewBox="0 0 28 36"><circle cx="14" cy="9.3" r="6.4" fill="none" stroke="#000" stroke-width="2.2"/><path d="M3.9 31.8 V26 Q3.9 20.5 9.4 20.5 H18.4 Q23.9 20.5 23.9 26 V31.8" fill="none" stroke="#000" stroke-width="2.3"/></svg>
<div class="t" style="top:1050.0px;height:20px;line-height:20px;font-size:13px;color:#111;left:280.5px;">BDFV user</div>
<svg style="position:absolute;left:350px;top:1058px;" width="9" height="5" viewBox="0 0 9 5"><path d="M0 0 L9 0 L4.5 5 Z" fill="#111"/></svg>
<div class="t" style="top:1049.5px;height:20px;line-height:20px;font-size:11px;color:#333;letter-spacing:0.2px;left:374.5px;">all intellectual property rights for LINARI are reserved. designed and developed by LINARI software development team.</div>
<div class="t" style="top:1050.5px;height:20px;line-height:20px;font-size:14px;color:#1f9b79;font-weight:700;letter-spacing:0.25px;left:1546.5px;">Warehouse: BD(FV) - Year: 2025</div>
<div style="left:1777px;top:1053px;width:1px;height:15px;background:#cfcfcf"></div>
<div class="t" style="top:1050.5px;height:20px;line-height:20px;font-size:14px;color:#222;letter-spacing:0.15px;left:1784.5px;">12/10/2025 7:26:51</div>
<div style="left:1908px;top:1053px;width:1px;height:16px;background:#777"></div>
</body></html>
